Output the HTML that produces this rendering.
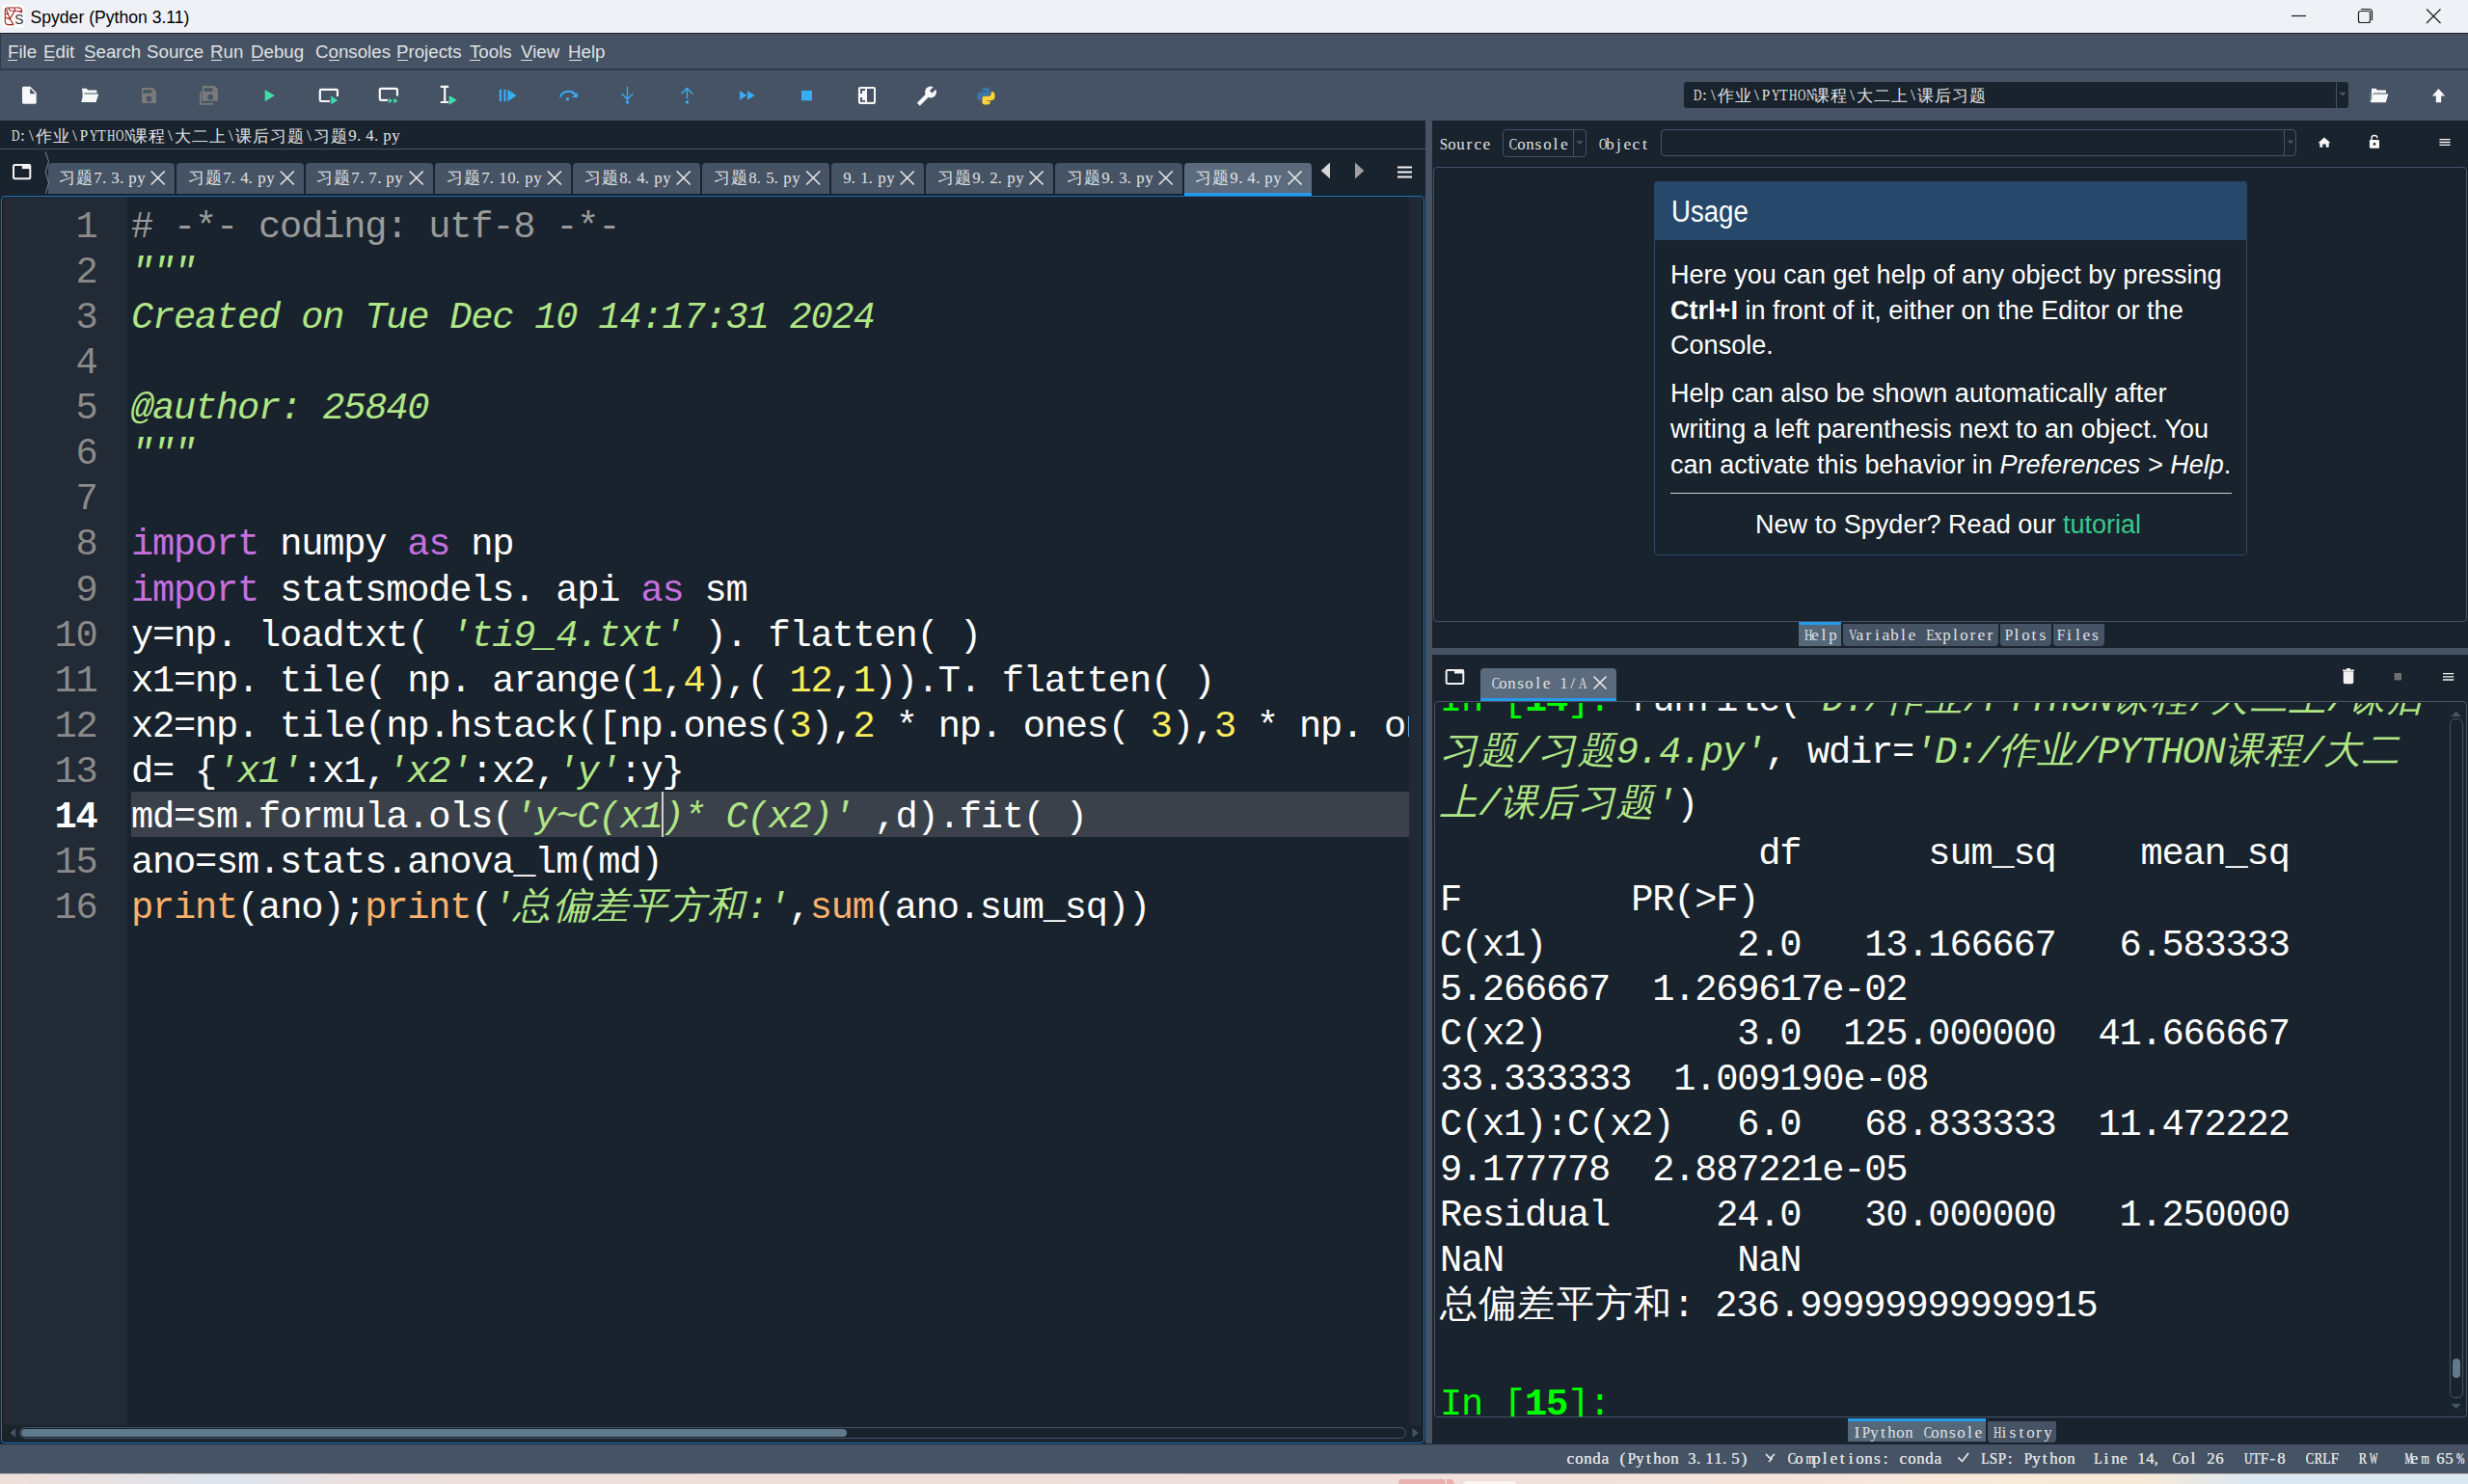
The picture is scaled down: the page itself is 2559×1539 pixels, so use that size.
<!DOCTYPE html>
<html><head><meta charset="utf-8">
<style>
*{margin:0;padding:0;box-sizing:border-box}
html,body{width:2559px;height:1539px;overflow:hidden;background:#19232d;font-family:"Liberation Sans",sans-serif;}
.a{position:absolute}
svg.a{overflow:visible}
</style></head>
<body>
<div class="a" style="left:0px;top:0px;width:2559px;height:34px;background:#eff1f6;"></div>
<svg class="a" style="left:0;top:0" width="40" height="34" viewBox="0 0 40 34">
<rect x="2" y="4.6" width="23.7" height="24.4" rx="4" fill="#fbfbfb"/>
<g fill="none" stroke="#a81c1c" stroke-width="1.1">
<path d="M22.6 13.5 V11 a3 3 0 0 0 -3 -3 H8.3 a3 3 0 0 0 -3 3 V22.6 a3 3 0 0 0 3 3 H14"/>
<path d="M6.5 9.5 L10.3 19.6 L14 25.6 M10.3 19.6 L15.5 11 L22.6 12.5 M6 18.5 L10.3 19.6 M6.2 14 L8.5 15 M9 8.3 L10 11 L22 11.5 M15 8.2 L15.5 11"/>
</g>
<text x="15.2" y="25.4" font-family="Liberation Sans" font-size="13.8" fill="#333">S</text>
</svg>
<div class="a" style="left:31.5px;top:7.60px;font-size:17.6px;line-height:21px;font-family:'Liberation Sans',sans-serif;color:#000;white-space:pre;">Spyder (Python 3.11)</div>
<svg class="a" style="left:0;top:0" width="2559" height="1539" viewBox="0 0 2559 1539"><g stroke="#1a1a1a" stroke-width="1.2" fill="none">
<path d="M2376 16.5 H2391"/>
<rect x="2445.5" y="11.5" width="12" height="12" rx="2"/>
<path d="M2448 9.5 H2456.5 a3 3 0 0 1 3 3 V21"/>
<path d="M2516 9.5 L2530.5 24 M2530.5 9.5 L2516 24"/>
</g></svg>
<div class="a" style="left:0px;top:34px;width:2559px;height:38px;background:#455364;border-top:1px solid #19232d;border-bottom:1px solid #2f3b48;border-left:1px solid #2f3b48"></div>
<div class="a" style="left:7.7px;top:42.25px;font-size:19.2px;line-height:23px;font-family:'Liberation Sans',sans-serif;color:#e0e1e3;white-space:pre;transform:scaleX(0.975);transform-origin:0 0;">File</div>
<div class="a" style="left:45.4px;top:42.25px;font-size:19.2px;line-height:23px;font-family:'Liberation Sans',sans-serif;color:#e0e1e3;white-space:pre;transform:scaleX(0.975);transform-origin:0 0;">Edit</div>
<div class="a" style="left:87px;top:42.25px;font-size:19.2px;line-height:23px;font-family:'Liberation Sans',sans-serif;color:#e0e1e3;white-space:pre;transform:scaleX(0.975);transform-origin:0 0;">Search</div>
<div class="a" style="left:152.3px;top:42.25px;font-size:19.2px;line-height:23px;font-family:'Liberation Sans',sans-serif;color:#e0e1e3;white-space:pre;transform:scaleX(0.975);transform-origin:0 0;">Source</div>
<div class="a" style="left:218.4px;top:42.25px;font-size:19.2px;line-height:23px;font-family:'Liberation Sans',sans-serif;color:#e0e1e3;white-space:pre;transform:scaleX(0.975);transform-origin:0 0;">Run</div>
<div class="a" style="left:260.4px;top:42.25px;font-size:19.2px;line-height:23px;font-family:'Liberation Sans',sans-serif;color:#e0e1e3;white-space:pre;transform:scaleX(0.975);transform-origin:0 0;">Debug</div>
<div class="a" style="left:327px;top:42.25px;font-size:19.2px;line-height:23px;font-family:'Liberation Sans',sans-serif;color:#e0e1e3;white-space:pre;transform:scaleX(0.975);transform-origin:0 0;">Consoles</div>
<div class="a" style="left:411px;top:42.25px;font-size:19.2px;line-height:23px;font-family:'Liberation Sans',sans-serif;color:#e0e1e3;white-space:pre;transform:scaleX(0.975);transform-origin:0 0;">Projects</div>
<div class="a" style="left:487px;top:42.25px;font-size:19.2px;line-height:23px;font-family:'Liberation Sans',sans-serif;color:#e0e1e3;white-space:pre;transform:scaleX(0.975);transform-origin:0 0;">Tools</div>
<div class="a" style="left:539.7px;top:42.25px;font-size:19.2px;line-height:23px;font-family:'Liberation Sans',sans-serif;color:#e0e1e3;white-space:pre;transform:scaleX(0.975);transform-origin:0 0;">View</div>
<div class="a" style="left:589.3px;top:42.25px;font-size:19.2px;line-height:23px;font-family:'Liberation Sans',sans-serif;color:#e0e1e3;white-space:pre;transform:scaleX(0.975);transform-origin:0 0;">Help</div>
<div class="a" style="left:8px;top:62px;width:10px;height:1.3px;background:#e0e1e3;"></div>
<div class="a" style="left:46px;top:62px;width:10px;height:1.3px;background:#e0e1e3;"></div>
<div class="a" style="left:87.5px;top:62px;width:11px;height:1.3px;background:#e0e1e3;"></div>
<div class="a" style="left:191px;top:62px;width:9px;height:1.3px;background:#e0e1e3;"></div>
<div class="a" style="left:218.5px;top:62px;width:11px;height:1.3px;background:#e0e1e3;"></div>
<div class="a" style="left:261px;top:62px;width:13px;height:1.3px;background:#e0e1e3;"></div>
<div class="a" style="left:341px;top:62px;width:11px;height:1.3px;background:#e0e1e3;"></div>
<div class="a" style="left:411.5px;top:62px;width:11px;height:1.3px;background:#e0e1e3;"></div>
<div class="a" style="left:487px;top:62px;width:11px;height:1.3px;background:#e0e1e3;"></div>
<div class="a" style="left:539.5px;top:62px;width:12px;height:1.3px;background:#e0e1e3;"></div>
<div class="a" style="left:589.5px;top:62px;width:13px;height:1.3px;background:#e0e1e3;"></div>
<div class="a" style="left:0px;top:72px;width:2559px;height:53px;background:#455364;border-top:1px solid #2f3b48"></div>
<svg class="a" style="left:0;top:0" width="2559" height="1539" viewBox="0 0 2559 1539">
<path d="M24.5 89.8 H31.3 L37.7 96.3 V106.3 a1.5 1.5 0 0 1 -1.5 1.5 H24.5 a1.5 1.5 0 0 1 -1.5 -1.5 V91.3 a1.5 1.5 0 0 1 1.5 -1.5Z" fill="#f8f8f8"/>
<path d="M31.2 91.5 V97.2 H36.6Z" fill="#455364"/>
<path d="M85 91.8 H89.8 L91.2 93.6 H99.5 a1 1 0 0 1 1 1 V96.5 H87.6 L85.6 104 V97 Z" fill="#f8f8f8"/>
<path d="M84.3 92.5 V105 a1 1 0 0 0 1 1 H99.5 L102.3 97.5 H87 L84.3 105" fill="#f8f8f8"/>
<path d="M148 90.9 H158.5 L162 94.4 V106 a1 1 0 0 1 -1 1 H148 a1 1 0 0 1 -1 -1 V91.9 a1 1 0 0 1 1 -1Z" fill="#7a7a7a"/>
<rect x="148.3" y="93.1" width="9" height="3.6" fill="#455364"/>
<circle cx="154.5" cy="102.5" r="2.9" fill="#455364"/>
<path d="M210.7 89 H222.3 L225.8 92.5 V103.7 a1 1 0 0 1 -1 1 H210.7 a1 1 0 0 1 -1 -1 V90 a1 1 0 0 1 1 -1Z" fill="#7a7a7a"/>
<rect x="211.5" y="91.3" width="9" height="3.6" fill="#455364"/>
<circle cx="218.2" cy="100.7" r="2.9" fill="#455364"/>
<path d="M208 95 V107.8 H221" stroke="#7a7a7a" stroke-width="1.8" fill="none"/>
<path d="M274.7 92.9 L284.9 99.1 L274.7 105.3Z" fill="#40dcaa"/>
<path d="M342 105 H333 a1.2 1.2 0 0 1 -1.2 -1.2 V94 a1.2 1.2 0 0 1 1.2 -1.2 H348.7 a1.2 1.2 0 0 1 1.2 1.2 V100" stroke="#f8f8f8" stroke-width="2.2" fill="none"/>
<path d="M342.8 98.8 L350.7 104 L342.8 109.1Z" fill="#40dcaa" stroke="#455364" stroke-width="0.8"/>
<path d="M402 103.8 H395 a1.2 1.2 0 0 1 -1.2 -1.2 V93.1 a1.2 1.2 0 0 1 1.2 -1.2 H410.7 a1.2 1.2 0 0 1 1.2 1.2 V99.5" stroke="#f8f8f8" stroke-width="2.2" fill="none"/>
<path d="M402.8 101.2 L407.7 104.5 L402.8 107.8Z M408 101.2 L413 104.5 L408 107.8Z" fill="#40dcaa" stroke="#455364" stroke-width="0.6"/>
<path d="M456.7 89.8 H465.2 M456.7 106 H465.2 M461.2 89.8 V106" stroke="#f8f8f8" stroke-width="2.2" fill="none"/>
<path d="M465.7 99 L473.7 103.8 L465.7 108.7Z" fill="#40dcaa"/>
<rect x="517.8" y="92.7" width="2.3" height="12.5" fill="#38acf6"/>
<rect x="522.3" y="92.7" width="2.3" height="12.5" fill="#38acf6"/>
<path d="M526.3 92.7 L535.6 99 L526.3 105.2Z" fill="#38acf6"/>
<path d="M580.9 100.8 C582.5 94.5 592 92.8 596.3 97.8" stroke="#38acf6" stroke-width="2" fill="none"/>
<path d="M599 95.8 L598.6 101.6 L593 100.4Z" fill="#38acf6"/>
<circle cx="588.5" cy="102.7" r="1.8" fill="#38acf6"/>
<path d="M650.5 90 V103 M644.7 97.2 L650.5 103 L656.3 97.2" stroke="#38acf6" stroke-width="1.4" fill="none"/>
<circle cx="650.5" cy="106" r="1.8" fill="#38acf6"/>
<path d="M712.4 91.4 V102.5 M706.5 97.2 L712.4 91.4 L718.2 97.2" stroke="#38acf6" stroke-width="1.4" fill="none"/>
<circle cx="712.4" cy="106" r="1.8" fill="#38acf6"/>
<path d="M767 94 L774.4 98.9 L767 103.8Z M775 94 L782.6 98.9 L775 103.8Z" fill="#38acf6"/>
<rect x="831" y="93.9" width="11" height="10.4" fill="#38acf6"/>
<rect x="889.9" y="89.9" width="18.1" height="18.1" rx="2.2" fill="#f8f8f8"/>
<rect x="899" y="92" width="7" height="13.8" fill="#455364"/>
<path d="M892 92 H897 V94 H894 V97 H892Z M892 101 H894 V103.9 H897 V105.8 H892Z" fill="#455364"/>
<circle cx="965" cy="95.5" r="5.9" fill="#f8f8f8"/>
<path d="M966.48 96.56 L971.93 91.11 L969.39 88.57 L963.94 94.02Z" fill="#455364"/>
<path d="M961.5 99 L952.3 108.2" stroke="#f8f8f8" stroke-width="4.2"/>
<path d="M1022.3 90.7 c-4.6 0 -4.3 2 -4.3 2 v2.1 h4.4 v0.6 h-6.2 c0 0 -2.9 -0.3 -2.9 4.3 c0 4.6 2.5 4.4 2.5 4.4 h1.5 v-2.1 c0 0 -0.1 -2.5 2.5 -2.5 h4.3 c0 0 2.4 0 2.4 -2.3 v-3.9 c0 0 0.4 -2.6 -4.2 -2.6z" fill="#3b77a8"/>
<path d="M1022.6 108.6 c4.6 0 4.3 -2 4.3 -2 v-2.1 h-4.4 v-0.6 h6.2 c0 0 2.9 0.3 2.9 -4.3 c0 -4.6 -2.5 -4.4 -2.5 -4.4 h-1.5 v2.1 c0 0 0.1 2.5 -2.5 2.5 h-4.3 c0 0 -2.4 0 -2.4 2.3 v3.9 c0 0 -0.4 2.6 4.2 2.6z" fill="#ffd43b"/>
<circle cx="1019.6" cy="92.6" r="0.8" fill="#2a5a85"/><circle cx="1025.8" cy="106.4" r="0.8" fill="#b89a20"/>
</svg>
<div class="a" style="left:0px;top:125px;width:1478px;height:29px;background:#19232d;"></div>
<div class="a" style="left:0px;top:154px;width:1478px;height:1px;background:#455364;"></div>
<div class="a" style="left:10px;top:130.19px;font-size:17.5px;line-height:21px;font-family:'Liberation Serif',serif;color:#e0e1e3;white-space:pre;"><span style="display:inline-block;width:9px;text-align:center"><span style="display:inline-block;transform:scaleX(0.665);">D</span></span><span style="display:inline-block;width:9px;text-align:center"><span style="display:inline-block;">:</span></span><span style="display:inline-block;width:9px;text-align:center"><span style="display:inline-block;">\</span></span></div>
<div class="a" style="left:37px;top:131.71px;font-size:17px;line-height:20px;font-family:'Liberation Sans',sans-serif;color:#e0e1e3;white-space:pre;letter-spacing:1.00px;">作业</div>
<div class="a" style="left:73px;top:130.19px;font-size:17.5px;line-height:21px;font-family:'Liberation Serif',serif;color:#e0e1e3;white-space:pre;"><span style="display:inline-block;width:9px;text-align:center"><span style="display:inline-block;">\</span></span><span style="display:inline-block;width:9px;text-align:center"><span style="display:inline-block;transform:scaleX(0.863);">P</span></span><span style="display:inline-block;width:9px;text-align:center"><span style="display:inline-block;transform:scaleX(0.665);">Y</span></span><span style="display:inline-block;width:9px;text-align:center"><span style="display:inline-block;transform:scaleX(0.786);">T</span></span><span style="display:inline-block;width:9px;text-align:center"><span style="display:inline-block;transform:scaleX(0.665);">H</span></span><span style="display:inline-block;width:9px;text-align:center"><span style="display:inline-block;transform:scaleX(0.665);">O</span></span><span style="display:inline-block;width:9px;text-align:center"><span style="display:inline-block;transform:scaleX(0.665);">N</span></span></div>
<div class="a" style="left:136px;top:131.71px;font-size:17px;line-height:20px;font-family:'Liberation Sans',sans-serif;color:#e0e1e3;white-space:pre;letter-spacing:1.00px;">课程</div>
<div class="a" style="left:172px;top:130.19px;font-size:17.5px;line-height:21px;font-family:'Liberation Serif',serif;color:#e0e1e3;white-space:pre;"><span style="display:inline-block;width:9px;text-align:center"><span style="display:inline-block;">\</span></span></div>
<div class="a" style="left:181px;top:131.71px;font-size:17px;line-height:20px;font-family:'Liberation Sans',sans-serif;color:#e0e1e3;white-space:pre;letter-spacing:1.00px;">大二上</div>
<div class="a" style="left:235px;top:130.19px;font-size:17.5px;line-height:21px;font-family:'Liberation Serif',serif;color:#e0e1e3;white-space:pre;"><span style="display:inline-block;width:9px;text-align:center"><span style="display:inline-block;">\</span></span></div>
<div class="a" style="left:244px;top:131.71px;font-size:17px;line-height:20px;font-family:'Liberation Sans',sans-serif;color:#e0e1e3;white-space:pre;letter-spacing:1.00px;">课后习题</div>
<div class="a" style="left:316px;top:130.19px;font-size:17.5px;line-height:21px;font-family:'Liberation Serif',serif;color:#e0e1e3;white-space:pre;"><span style="display:inline-block;width:9px;text-align:center"><span style="display:inline-block;">\</span></span></div>
<div class="a" style="left:325px;top:131.71px;font-size:17px;line-height:20px;font-family:'Liberation Sans',sans-serif;color:#e0e1e3;white-space:pre;letter-spacing:1.00px;">习题</div>
<div class="a" style="left:361px;top:130.19px;font-size:17.5px;line-height:21px;font-family:'Liberation Serif',serif;color:#e0e1e3;white-space:pre;"><span style="display:inline-block;width:9px;text-align:center"><span style="display:inline-block;transform:scaleX(0.960);">9</span></span><span style="display:inline-block;width:9px;text-align:left"><span style="display:inline-block;">.</span></span><span style="display:inline-block;width:9px;text-align:center"><span style="display:inline-block;transform:scaleX(0.960);">4</span></span><span style="display:inline-block;width:9px;text-align:left"><span style="display:inline-block;">.</span></span><span style="display:inline-block;width:9px;text-align:center"><span style="display:inline-block;transform:scaleX(0.960);">p</span></span><span style="display:inline-block;width:9px;text-align:center"><span style="display:inline-block;transform:scaleX(0.960);">y</span></span></div>
<div class="a" style="left:0px;top:155px;width:1478px;height:48px;background:#19232d;"></div>
<div class="a" style="left:49.6px;top:169px;width:131.1px;height:32px;background:#455364;border-radius:4px 4px 0 0"></div>
<div class="a" style="left:61.1px;top:175.11px;font-size:17px;line-height:20px;font-family:'Liberation Sans',sans-serif;color:#e0e1e3;white-space:pre;letter-spacing:1.00px;">习题</div>
<div class="a" style="left:97.1px;top:173.59px;font-size:17.5px;line-height:21px;font-family:'Liberation Serif',serif;color:#e0e1e3;white-space:pre;"><span style="display:inline-block;width:9px;text-align:center"><span style="display:inline-block;transform:scaleX(0.960);">7</span></span><span style="display:inline-block;width:9px;text-align:left"><span style="display:inline-block;">.</span></span><span style="display:inline-block;width:9px;text-align:center"><span style="display:inline-block;transform:scaleX(0.960);">3</span></span><span style="display:inline-block;width:9px;text-align:left"><span style="display:inline-block;">.</span></span><span style="display:inline-block;width:9px;text-align:center"><span style="display:inline-block;transform:scaleX(0.960);">p</span></span><span style="display:inline-block;width:9px;text-align:center"><span style="display:inline-block;transform:scaleX(0.960);">y</span></span></div>
<div class="a" style="left:183px;top:169px;width:131.8px;height:32px;background:#455364;border-radius:4px 4px 0 0"></div>
<div class="a" style="left:194.5px;top:175.11px;font-size:17px;line-height:20px;font-family:'Liberation Sans',sans-serif;color:#e0e1e3;white-space:pre;letter-spacing:1.00px;">习题</div>
<div class="a" style="left:230.5px;top:173.59px;font-size:17.5px;line-height:21px;font-family:'Liberation Serif',serif;color:#e0e1e3;white-space:pre;"><span style="display:inline-block;width:9px;text-align:center"><span style="display:inline-block;transform:scaleX(0.960);">7</span></span><span style="display:inline-block;width:9px;text-align:left"><span style="display:inline-block;">.</span></span><span style="display:inline-block;width:9px;text-align:center"><span style="display:inline-block;transform:scaleX(0.960);">4</span></span><span style="display:inline-block;width:9px;text-align:left"><span style="display:inline-block;">.</span></span><span style="display:inline-block;width:9px;text-align:center"><span style="display:inline-block;transform:scaleX(0.960);">p</span></span><span style="display:inline-block;width:9px;text-align:center"><span style="display:inline-block;transform:scaleX(0.960);">y</span></span></div>
<div class="a" style="left:316.8px;top:169px;width:131.89999999999998px;height:32px;background:#455364;border-radius:4px 4px 0 0"></div>
<div class="a" style="left:328.3px;top:175.11px;font-size:17px;line-height:20px;font-family:'Liberation Sans',sans-serif;color:#e0e1e3;white-space:pre;letter-spacing:1.00px;">习题</div>
<div class="a" style="left:364.3px;top:173.59px;font-size:17.5px;line-height:21px;font-family:'Liberation Serif',serif;color:#e0e1e3;white-space:pre;"><span style="display:inline-block;width:9px;text-align:center"><span style="display:inline-block;transform:scaleX(0.960);">7</span></span><span style="display:inline-block;width:9px;text-align:left"><span style="display:inline-block;">.</span></span><span style="display:inline-block;width:9px;text-align:center"><span style="display:inline-block;transform:scaleX(0.960);">7</span></span><span style="display:inline-block;width:9px;text-align:left"><span style="display:inline-block;">.</span></span><span style="display:inline-block;width:9px;text-align:center"><span style="display:inline-block;transform:scaleX(0.960);">p</span></span><span style="display:inline-block;width:9px;text-align:center"><span style="display:inline-block;transform:scaleX(0.960);">y</span></span></div>
<div class="a" style="left:451px;top:169px;width:140.89999999999998px;height:32px;background:#455364;border-radius:4px 4px 0 0"></div>
<div class="a" style="left:462.5px;top:175.11px;font-size:17px;line-height:20px;font-family:'Liberation Sans',sans-serif;color:#e0e1e3;white-space:pre;letter-spacing:1.00px;">习题</div>
<div class="a" style="left:498.5px;top:173.59px;font-size:17.5px;line-height:21px;font-family:'Liberation Serif',serif;color:#e0e1e3;white-space:pre;"><span style="display:inline-block;width:9px;text-align:center"><span style="display:inline-block;transform:scaleX(0.960);">7</span></span><span style="display:inline-block;width:9px;text-align:left"><span style="display:inline-block;">.</span></span><span style="display:inline-block;width:9px;text-align:center"><span style="display:inline-block;transform:scaleX(0.960);">1</span></span><span style="display:inline-block;width:9px;text-align:center"><span style="display:inline-block;transform:scaleX(0.960);">0</span></span><span style="display:inline-block;width:9px;text-align:left"><span style="display:inline-block;">.</span></span><span style="display:inline-block;width:9px;text-align:center"><span style="display:inline-block;transform:scaleX(0.960);">p</span></span><span style="display:inline-block;width:9px;text-align:center"><span style="display:inline-block;transform:scaleX(0.960);">y</span></span></div>
<div class="a" style="left:594px;top:169px;width:131.70000000000005px;height:32px;background:#455364;border-radius:4px 4px 0 0"></div>
<div class="a" style="left:605.5px;top:175.11px;font-size:17px;line-height:20px;font-family:'Liberation Sans',sans-serif;color:#e0e1e3;white-space:pre;letter-spacing:1.00px;">习题</div>
<div class="a" style="left:641.5px;top:173.59px;font-size:17.5px;line-height:21px;font-family:'Liberation Serif',serif;color:#e0e1e3;white-space:pre;"><span style="display:inline-block;width:9px;text-align:center"><span style="display:inline-block;transform:scaleX(0.960);">8</span></span><span style="display:inline-block;width:9px;text-align:left"><span style="display:inline-block;">.</span></span><span style="display:inline-block;width:9px;text-align:center"><span style="display:inline-block;transform:scaleX(0.960);">4</span></span><span style="display:inline-block;width:9px;text-align:left"><span style="display:inline-block;">.</span></span><span style="display:inline-block;width:9px;text-align:center"><span style="display:inline-block;transform:scaleX(0.960);">p</span></span><span style="display:inline-block;width:9px;text-align:center"><span style="display:inline-block;transform:scaleX(0.960);">y</span></span></div>
<div class="a" style="left:728px;top:169px;width:132.20000000000005px;height:32px;background:#455364;border-radius:4px 4px 0 0"></div>
<div class="a" style="left:739.5px;top:175.11px;font-size:17px;line-height:20px;font-family:'Liberation Sans',sans-serif;color:#e0e1e3;white-space:pre;letter-spacing:1.00px;">习题</div>
<div class="a" style="left:775.5px;top:173.59px;font-size:17.5px;line-height:21px;font-family:'Liberation Serif',serif;color:#e0e1e3;white-space:pre;"><span style="display:inline-block;width:9px;text-align:center"><span style="display:inline-block;transform:scaleX(0.960);">8</span></span><span style="display:inline-block;width:9px;text-align:left"><span style="display:inline-block;">.</span></span><span style="display:inline-block;width:9px;text-align:center"><span style="display:inline-block;transform:scaleX(0.960);">5</span></span><span style="display:inline-block;width:9px;text-align:left"><span style="display:inline-block;">.</span></span><span style="display:inline-block;width:9px;text-align:center"><span style="display:inline-block;transform:scaleX(0.960);">p</span></span><span style="display:inline-block;width:9px;text-align:center"><span style="display:inline-block;transform:scaleX(0.960);">y</span></span></div>
<div class="a" style="left:861.9px;top:169px;width:95.80000000000007px;height:32px;background:#455364;border-radius:4px 4px 0 0"></div>
<div class="a" style="left:873.4px;top:173.59px;font-size:17.5px;line-height:21px;font-family:'Liberation Serif',serif;color:#e0e1e3;white-space:pre;"><span style="display:inline-block;width:9px;text-align:center"><span style="display:inline-block;transform:scaleX(0.960);">9</span></span><span style="display:inline-block;width:9px;text-align:left"><span style="display:inline-block;">.</span></span><span style="display:inline-block;width:9px;text-align:center"><span style="display:inline-block;transform:scaleX(0.960);">1</span></span><span style="display:inline-block;width:9px;text-align:left"><span style="display:inline-block;">.</span></span><span style="display:inline-block;width:9px;text-align:center"><span style="display:inline-block;transform:scaleX(0.960);">p</span></span><span style="display:inline-block;width:9px;text-align:center"><span style="display:inline-block;transform:scaleX(0.960);">y</span></span></div>
<div class="a" style="left:960px;top:169px;width:131.5999999999999px;height:32px;background:#455364;border-radius:4px 4px 0 0"></div>
<div class="a" style="left:971.5px;top:175.11px;font-size:17px;line-height:20px;font-family:'Liberation Sans',sans-serif;color:#e0e1e3;white-space:pre;letter-spacing:1.00px;">习题</div>
<div class="a" style="left:1007.5px;top:173.59px;font-size:17.5px;line-height:21px;font-family:'Liberation Serif',serif;color:#e0e1e3;white-space:pre;"><span style="display:inline-block;width:9px;text-align:center"><span style="display:inline-block;transform:scaleX(0.960);">9</span></span><span style="display:inline-block;width:9px;text-align:left"><span style="display:inline-block;">.</span></span><span style="display:inline-block;width:9px;text-align:center"><span style="display:inline-block;transform:scaleX(0.960);">2</span></span><span style="display:inline-block;width:9px;text-align:left"><span style="display:inline-block;">.</span></span><span style="display:inline-block;width:9px;text-align:center"><span style="display:inline-block;transform:scaleX(0.960);">p</span></span><span style="display:inline-block;width:9px;text-align:center"><span style="display:inline-block;transform:scaleX(0.960);">y</span></span></div>
<div class="a" style="left:1094px;top:169px;width:131.70000000000005px;height:32px;background:#455364;border-radius:4px 4px 0 0"></div>
<div class="a" style="left:1105.5px;top:175.11px;font-size:17px;line-height:20px;font-family:'Liberation Sans',sans-serif;color:#e0e1e3;white-space:pre;letter-spacing:1.00px;">习题</div>
<div class="a" style="left:1141.5px;top:173.59px;font-size:17.5px;line-height:21px;font-family:'Liberation Serif',serif;color:#e0e1e3;white-space:pre;"><span style="display:inline-block;width:9px;text-align:center"><span style="display:inline-block;transform:scaleX(0.960);">9</span></span><span style="display:inline-block;width:9px;text-align:left"><span style="display:inline-block;">.</span></span><span style="display:inline-block;width:9px;text-align:center"><span style="display:inline-block;transform:scaleX(0.960);">3</span></span><span style="display:inline-block;width:9px;text-align:left"><span style="display:inline-block;">.</span></span><span style="display:inline-block;width:9px;text-align:center"><span style="display:inline-block;transform:scaleX(0.960);">p</span></span><span style="display:inline-block;width:9px;text-align:center"><span style="display:inline-block;transform:scaleX(0.960);">y</span></span></div>
<div class="a" style="left:1227.8px;top:169px;width:131.79999999999995px;height:32px;background:#5b6b7d;border-radius:4px 4px 0 0"></div>
<div class="a" style="left:1227.8px;top:200px;width:131.79999999999995px;height:3px;background:#259ae9;"></div>
<div class="a" style="left:1239.3px;top:175.11px;font-size:17px;line-height:20px;font-family:'Liberation Sans',sans-serif;color:#e0e1e3;white-space:pre;letter-spacing:1.00px;">习题</div>
<div class="a" style="left:1275.3px;top:173.59px;font-size:17.5px;line-height:21px;font-family:'Liberation Serif',serif;color:#e0e1e3;white-space:pre;"><span style="display:inline-block;width:9px;text-align:center"><span style="display:inline-block;transform:scaleX(0.960);">9</span></span><span style="display:inline-block;width:9px;text-align:left"><span style="display:inline-block;">.</span></span><span style="display:inline-block;width:9px;text-align:center"><span style="display:inline-block;transform:scaleX(0.960);">4</span></span><span style="display:inline-block;width:9px;text-align:left"><span style="display:inline-block;">.</span></span><span style="display:inline-block;width:9px;text-align:center"><span style="display:inline-block;transform:scaleX(0.960);">p</span></span><span style="display:inline-block;width:9px;text-align:center"><span style="display:inline-block;transform:scaleX(0.960);">y</span></span></div>
<svg class="a" style="left:0;top:0" width="2559" height="1539" viewBox="0 0 2559 1539"><path d="M156.7 177.5 L170.7 191.5 M170.7 177.5 L156.7 191.5" stroke="#e6e6e6" stroke-width="1.7"/><path d="M290.8 177.5 L304.8 191.5 M304.8 177.5 L290.8 191.5" stroke="#e6e6e6" stroke-width="1.7"/><path d="M424.7 177.5 L438.7 191.5 M438.7 177.5 L424.7 191.5" stroke="#e6e6e6" stroke-width="1.7"/><path d="M567.9 177.5 L581.9 191.5 M581.9 177.5 L567.9 191.5" stroke="#e6e6e6" stroke-width="1.7"/><path d="M701.7 177.5 L715.7 191.5 M715.7 177.5 L701.7 191.5" stroke="#e6e6e6" stroke-width="1.7"/><path d="M836.2 177.5 L850.2 191.5 M850.2 177.5 L836.2 191.5" stroke="#e6e6e6" stroke-width="1.7"/><path d="M933.7 177.5 L947.7 191.5 M947.7 177.5 L933.7 191.5" stroke="#e6e6e6" stroke-width="1.7"/><path d="M1067.6 177.5 L1081.6 191.5 M1081.6 177.5 L1067.6 191.5" stroke="#e6e6e6" stroke-width="1.7"/><path d="M1201.7 177.5 L1215.7 191.5 M1215.7 177.5 L1201.7 191.5" stroke="#e6e6e6" stroke-width="1.7"/><path d="M1335.6 177.5 L1349.6 191.5 M1349.6 177.5 L1335.6 191.5" stroke="#e6e6e6" stroke-width="1.7"/>
<path d="M47 157.5 L50.5 167.5 L47.3 178 L50.5 189.8 L47.3 200.5" stroke="#8a8f96" stroke-width="0.9" fill="none" stroke-linejoin="round"/>
<rect x="14" y="171" width="17.3" height="14.3" rx="1.5" stroke="#f5f5f5" stroke-width="2" fill="none"/>
<rect x="22.8" y="170.5" width="9" height="4.6" fill="#f5f5f5"/>
<path d="M1379 168.6 V185.2 L1369.7 176.9Z" fill="#d8d8d8"/>
<path d="M1405 168.6 V185.6 L1414.3 177.1Z" fill="#a0a0a0"/>
<path d="M1449 173.5 H1464 M1449 178.5 H1464 M1449 183.5 H1464" stroke="#f5f5f5" stroke-width="1.9"/>
</svg>
<div class="a" style="left:1px;top:203px;width:1476px;height:1294px;background:#19232d;border:1px solid #1a72bb;border-radius:4px"></div>
<div class="a" style="left:4px;top:204px;width:128px;height:1274px;background:#222a35;"></div>
<div class="a" style="left:1461px;top:204px;width:13px;height:1274px;background:#212934;"></div>
<div class="a" style="left:20px;top:1480px;width:1438px;height:12px;background:transparent;border:1px solid #455364;border-radius:6px"></div>
<div class="a" style="left:21.8px;top:1481.8px;width:856px;height:8.2px;background:#60798b;border-radius:4px"></div>
<svg class="a" style="left:0;top:0" width="2559" height="1539" viewBox="0 0 2559 1539"><path d="M16.2 1481 V1491 L10.5 1486Z" fill="#455364"/>
<path d="M1464.5 1481 V1491 L1470.7 1486Z" fill="#455364"/></svg>
<div class="a" style="left:136px;top:821px;width:1325px;height:47px;background:#3a414a;"></div>
<div class="a" style="left:78.5px;top:213.20px;font-size:38.7px;line-height:46px;font-family:'Liberation Mono',monospace;color:#8a8a8a;white-space:pre;letter-spacing:-1.2px;">1</div>
<div class="a" style="left:78.5px;top:260.24px;font-size:38.7px;line-height:46px;font-family:'Liberation Mono',monospace;color:#8a8a8a;white-space:pre;letter-spacing:-1.2px;">2</div>
<div class="a" style="left:78.5px;top:307.28px;font-size:38.7px;line-height:46px;font-family:'Liberation Mono',monospace;color:#8a8a8a;white-space:pre;letter-spacing:-1.2px;">3</div>
<div class="a" style="left:78.5px;top:354.32px;font-size:38.7px;line-height:46px;font-family:'Liberation Mono',monospace;color:#8a8a8a;white-space:pre;letter-spacing:-1.2px;">4</div>
<div class="a" style="left:78.5px;top:401.36px;font-size:38.7px;line-height:46px;font-family:'Liberation Mono',monospace;color:#8a8a8a;white-space:pre;letter-spacing:-1.2px;">5</div>
<div class="a" style="left:78.5px;top:448.40px;font-size:38.7px;line-height:46px;font-family:'Liberation Mono',monospace;color:#8a8a8a;white-space:pre;letter-spacing:-1.2px;">6</div>
<div class="a" style="left:78.5px;top:495.44px;font-size:38.7px;line-height:46px;font-family:'Liberation Mono',monospace;color:#8a8a8a;white-space:pre;letter-spacing:-1.2px;">7</div>
<div class="a" style="left:78.5px;top:542.48px;font-size:38.7px;line-height:46px;font-family:'Liberation Mono',monospace;color:#8a8a8a;white-space:pre;letter-spacing:-1.2px;">8</div>
<div class="a" style="left:78.5px;top:589.52px;font-size:38.7px;line-height:46px;font-family:'Liberation Mono',monospace;color:#8a8a8a;white-space:pre;letter-spacing:-1.2px;">9</div>
<div class="a" style="left:56.5px;top:636.56px;font-size:38.7px;line-height:46px;font-family:'Liberation Mono',monospace;color:#8a8a8a;white-space:pre;letter-spacing:-1.2px;">10</div>
<div class="a" style="left:56.5px;top:683.60px;font-size:38.7px;line-height:46px;font-family:'Liberation Mono',monospace;color:#8a8a8a;white-space:pre;letter-spacing:-1.2px;">11</div>
<div class="a" style="left:56.5px;top:730.64px;font-size:38.7px;line-height:46px;font-family:'Liberation Mono',monospace;color:#8a8a8a;white-space:pre;letter-spacing:-1.2px;">12</div>
<div class="a" style="left:56.5px;top:777.68px;font-size:38.7px;line-height:46px;font-family:'Liberation Mono',monospace;color:#8a8a8a;white-space:pre;letter-spacing:-1.2px;">13</div>
<div class="a" style="left:56.5px;top:824.72px;font-size:38.7px;line-height:46px;font-family:'Liberation Mono',monospace;color:#ffffff;white-space:pre;letter-spacing:-1.2px;font-weight:bold;">14</div>
<div class="a" style="left:56.5px;top:871.76px;font-size:38.7px;line-height:46px;font-family:'Liberation Mono',monospace;color:#8a8a8a;white-space:pre;letter-spacing:-1.2px;">15</div>
<div class="a" style="left:56.5px;top:918.80px;font-size:38.7px;line-height:46px;font-family:'Liberation Mono',monospace;color:#8a8a8a;white-space:pre;letter-spacing:-1.2px;">16</div>
<div class="a" style="left:136px;top:204px;width:1325px;height:1274px;overflow:hidden">
<div class="a" style="left:0px;top:9.20px;font-size:38.7px;line-height:46px;font-family:'Liberation Mono',monospace;color:#ffffff;white-space:pre;letter-spacing:-1.2px;"><span style="color:#9a9a9a;"># -*- coding: utf-8 -*-</span></div>
<div class="a" style="left:0px;top:56.24px;font-size:38.7px;line-height:46px;font-family:'Liberation Mono',monospace;color:#ffffff;white-space:pre;letter-spacing:-1.2px;"><span style="color:#b0e686;font-style:italic;">&quot;&quot;&quot;</span></div>
<div class="a" style="left:0px;top:103.28px;font-size:38.7px;line-height:46px;font-family:'Liberation Mono',monospace;color:#ffffff;white-space:pre;letter-spacing:-1.2px;"><span style="color:#b0e686;font-style:italic;">Created on Tue Dec 10 14:17:31 2024</span></div>
<div class="a" style="left:0px;top:197.36px;font-size:38.7px;line-height:46px;font-family:'Liberation Mono',monospace;color:#ffffff;white-space:pre;letter-spacing:-1.2px;"><span style="color:#b0e686;font-style:italic;">@author: 25840</span></div>
<div class="a" style="left:0px;top:244.40px;font-size:38.7px;line-height:46px;font-family:'Liberation Mono',monospace;color:#ffffff;white-space:pre;letter-spacing:-1.2px;"><span style="color:#b0e686;font-style:italic;">&quot;&quot;&quot;</span></div>
<div class="a" style="left:0px;top:338.48px;font-size:38.7px;line-height:46px;font-family:'Liberation Mono',monospace;color:#ffffff;white-space:pre;letter-spacing:-1.2px;"><span style="color:#c670e0;">import</span><span style="color:#ffffff;"> numpy </span><span style="color:#c670e0;">as</span><span style="color:#ffffff;"> np</span></div>
<div class="a" style="left:0px;top:385.52px;font-size:38.7px;line-height:46px;font-family:'Liberation Mono',monospace;color:#ffffff;white-space:pre;letter-spacing:-1.2px;"><span style="color:#c670e0;">import</span><span style="color:#ffffff;"> statsmodels. api </span><span style="color:#c670e0;">as</span><span style="color:#ffffff;"> sm</span></div>
<div class="a" style="left:0px;top:432.56px;font-size:38.7px;line-height:46px;font-family:'Liberation Mono',monospace;color:#ffffff;white-space:pre;letter-spacing:-1.2px;"><span style="color:#ffffff;">y=np. loadtxt( </span><span style="color:#b0e686;font-style:italic;">&#x27;ti9_4.txt&#x27;</span><span style="color:#ffffff;"> ). flatten( )</span></div>
<div class="a" style="left:0px;top:479.60px;font-size:38.7px;line-height:46px;font-family:'Liberation Mono',monospace;color:#ffffff;white-space:pre;letter-spacing:-1.2px;"><span style="color:#ffffff;">x1=np. tile( np. arange(</span><span style="color:#faed5c;">1</span><span style="color:#ffffff;">,</span><span style="color:#faed5c;">4</span><span style="color:#ffffff;">),( </span><span style="color:#faed5c;">12</span><span style="color:#ffffff;">,</span><span style="color:#faed5c;">1</span><span style="color:#ffffff;">)).T. flatten( )</span></div>
<div class="a" style="left:0px;top:526.64px;font-size:38.7px;line-height:46px;font-family:'Liberation Mono',monospace;color:#ffffff;white-space:pre;letter-spacing:-1.2px;"><span style="color:#ffffff;">x2=np. tile(np.hstack([np.ones(</span><span style="color:#faed5c;">3</span><span style="color:#ffffff;">),</span><span style="color:#faed5c;">2</span><span style="color:#ffffff;"> * np. ones( </span><span style="color:#faed5c;">3</span><span style="color:#ffffff;">),</span><span style="color:#faed5c;">3</span><span style="color:#ffffff;"> * np. ones( 3)]),4)</span></div>
<div class="a" style="left:0px;top:573.68px;font-size:38.7px;line-height:46px;font-family:'Liberation Mono',monospace;color:#ffffff;white-space:pre;letter-spacing:-1.2px;"><span style="color:#ffffff;">d= {</span><span style="color:#b0e686;font-style:italic;">&#x27;x1&#x27;</span><span style="color:#ffffff;">:x1,</span><span style="color:#b0e686;font-style:italic;">&#x27;x2&#x27;</span><span style="color:#ffffff;">:x2,</span><span style="color:#b0e686;font-style:italic;">&#x27;y&#x27;</span><span style="color:#ffffff;">:y}</span></div>
<div class="a" style="left:0px;top:620.72px;font-size:38.7px;line-height:46px;font-family:'Liberation Mono',monospace;color:#ffffff;white-space:pre;letter-spacing:-1.2px;"><span style="color:#ffffff;">md=sm.formula.ols(</span><span style="color:#b0e686;font-style:italic;">&#x27;y~C(x1)* C(x2)&#x27;</span><span style="color:#ffffff;"> ,d).fit( )</span></div>
<div class="a" style="left:0px;top:667.76px;font-size:38.7px;line-height:46px;font-family:'Liberation Mono',monospace;color:#ffffff;white-space:pre;letter-spacing:-1.2px;"><span style="color:#ffffff;">ano=sm.stats.anova_lm(md)</span></div>
<div class="a" style="left:0px;top:714.80px;font-size:38.7px;line-height:46px;font-family:'Liberation Mono',monospace;color:#ffffff;white-space:pre;letter-spacing:-1.2px;"><span style="color:#fab16c;">print</span><span style="color:#ffffff;">(ano);</span><span style="color:#fab16c;">print</span><span style="color:#ffffff;">(</span><span style="color:#b0e686;font-style:italic;">&#x27;</span><span style="color:#b0e686;font-style:italic;letter-spacing:1.2px">总偏差平方和</span><span style="color:#b0e686;font-style:italic;">:&#x27;</span><span style="color:#ffffff;">,</span><span style="color:#fab16c;">sum</span><span style="color:#ffffff;">(ano.sum_sq))</span></div>
</div>
<div class="a" style="left:686px;top:821px;width:2px;height:47px;background:#d9cfc4;"></div>
<div class="a" style="left:1746px;top:85px;width:689px;height:26.7px;background:#19232d;border-radius:3px"></div>
<div class="a" style="left:2422px;top:85px;width:1.2px;height:26.7px;background:#455364;"></div>
<div class="a" style="left:1754px;top:88.39px;font-size:17.5px;line-height:21px;font-family:'Liberation Serif',serif;color:#e0e1e3;white-space:pre;"><span style="display:inline-block;width:9px;text-align:center"><span style="display:inline-block;transform:scaleX(0.665);">D</span></span><span style="display:inline-block;width:9px;text-align:center"><span style="display:inline-block;">:</span></span><span style="display:inline-block;width:9px;text-align:center"><span style="display:inline-block;">\</span></span></div>
<div class="a" style="left:1781px;top:89.91px;font-size:17px;line-height:20px;font-family:'Liberation Sans',sans-serif;color:#e0e1e3;white-space:pre;letter-spacing:1.00px;">作业</div>
<div class="a" style="left:1817px;top:88.39px;font-size:17.5px;line-height:21px;font-family:'Liberation Serif',serif;color:#e0e1e3;white-space:pre;"><span style="display:inline-block;width:9px;text-align:center"><span style="display:inline-block;">\</span></span><span style="display:inline-block;width:9px;text-align:center"><span style="display:inline-block;transform:scaleX(0.863);">P</span></span><span style="display:inline-block;width:9px;text-align:center"><span style="display:inline-block;transform:scaleX(0.665);">Y</span></span><span style="display:inline-block;width:9px;text-align:center"><span style="display:inline-block;transform:scaleX(0.786);">T</span></span><span style="display:inline-block;width:9px;text-align:center"><span style="display:inline-block;transform:scaleX(0.665);">H</span></span><span style="display:inline-block;width:9px;text-align:center"><span style="display:inline-block;transform:scaleX(0.665);">O</span></span><span style="display:inline-block;width:9px;text-align:center"><span style="display:inline-block;transform:scaleX(0.665);">N</span></span></div>
<div class="a" style="left:1880px;top:89.91px;font-size:17px;line-height:20px;font-family:'Liberation Sans',sans-serif;color:#e0e1e3;white-space:pre;letter-spacing:1.00px;">课程</div>
<div class="a" style="left:1916px;top:88.39px;font-size:17.5px;line-height:21px;font-family:'Liberation Serif',serif;color:#e0e1e3;white-space:pre;"><span style="display:inline-block;width:9px;text-align:center"><span style="display:inline-block;">\</span></span></div>
<div class="a" style="left:1925px;top:89.91px;font-size:17px;line-height:20px;font-family:'Liberation Sans',sans-serif;color:#e0e1e3;white-space:pre;letter-spacing:1.00px;">大二上</div>
<div class="a" style="left:1979px;top:88.39px;font-size:17.5px;line-height:21px;font-family:'Liberation Serif',serif;color:#e0e1e3;white-space:pre;"><span style="display:inline-block;width:9px;text-align:center"><span style="display:inline-block;">\</span></span></div>
<div class="a" style="left:1988px;top:89.91px;font-size:17px;line-height:20px;font-family:'Liberation Sans',sans-serif;color:#e0e1e3;white-space:pre;letter-spacing:1.00px;">课后习题</div>
<svg class="a" style="left:0;top:0" width="2559" height="1539" viewBox="0 0 2559 1539"><path d="M2425.3 95.8 H2432.6 L2429 99.8Z" fill="#455364"/>
<path d="M2459 91.8 H2463.5 L2465 93.6 H2473 a1 1 0 0 1 1 1 V96.5 H2461 L2459 104 V93 Z" fill="#f8f8f8"/>
<path d="M2457.8 92.5 V105.3 a1 1 0 0 0 1 1 H2473.8 L2476.4 97.5 H2460.8 L2458.3 105" fill="#f8f8f8"/>
<path d="M2528.5 92.1 L2535.2 99.4 H2531.2 V106.3 H2525.8 V99.4 H2521.8Z" fill="#f8f8f8"/>
</svg>
<div class="a" style="left:1478px;top:125px;width:7px;height:1372px;background:#455364;"></div>
<div class="a" style="left:1485px;top:125px;width:1074px;height:547px;background:#19232d;"></div>
<div class="a" style="left:1492px;top:138.59px;font-size:17.5px;line-height:21px;font-family:'Liberation Serif',serif;color:#e0e1e3;white-space:pre;"><span style="display:inline-block;width:9px;text-align:center"><span style="display:inline-block;transform:scaleX(0.863);">S</span></span><span style="display:inline-block;width:9px;text-align:center"><span style="display:inline-block;transform:scaleX(0.960);">o</span></span><span style="display:inline-block;width:9px;text-align:center"><span style="display:inline-block;transform:scaleX(0.960);">u</span></span><span style="display:inline-block;width:9px;text-align:center"><span style="display:inline-block;">r</span></span><span style="display:inline-block;width:9px;text-align:center"><span style="display:inline-block;">c</span></span><span style="display:inline-block;width:9px;text-align:center"><span style="display:inline-block;">e</span></span></div>
<div class="a" style="left:1558px;top:134.3px;width:86.7px;height:28.4px;background:transparent;border:1px solid #455364;border-radius:4px"></div>
<div class="a" style="left:1631px;top:134.3px;width:1px;height:28.4px;background:#455364;"></div>
<div class="a" style="left:1563.4px;top:138.59px;font-size:17.5px;line-height:21px;font-family:'Liberation Serif',serif;color:#e0e1e3;white-space:pre;"><span style="display:inline-block;width:9px;text-align:center"><span style="display:inline-block;transform:scaleX(0.720);">C</span></span><span style="display:inline-block;width:9px;text-align:center"><span style="display:inline-block;transform:scaleX(0.960);">o</span></span><span style="display:inline-block;width:9px;text-align:center"><span style="display:inline-block;transform:scaleX(0.960);">n</span></span><span style="display:inline-block;width:9px;text-align:center"><span style="display:inline-block;">s</span></span><span style="display:inline-block;width:9px;text-align:center"><span style="display:inline-block;transform:scaleX(0.960);">o</span></span><span style="display:inline-block;width:9px;text-align:center"><span style="display:inline-block;">l</span></span><span style="display:inline-block;width:9px;text-align:center"><span style="display:inline-block;">e</span></span></div>
<div class="a" style="left:1656px;top:138.59px;font-size:17.5px;line-height:21px;font-family:'Liberation Serif',serif;color:#e0e1e3;white-space:pre;"><span style="display:inline-block;width:9px;text-align:center"><span style="display:inline-block;transform:scaleX(0.665);">O</span></span><span style="display:inline-block;width:9px;text-align:center"><span style="display:inline-block;transform:scaleX(0.960);">b</span></span><span style="display:inline-block;width:9px;text-align:center"><span style="display:inline-block;">j</span></span><span style="display:inline-block;width:9px;text-align:center"><span style="display:inline-block;">e</span></span><span style="display:inline-block;width:9px;text-align:center"><span style="display:inline-block;">c</span></span><span style="display:inline-block;width:9px;text-align:center"><span style="display:inline-block;">t</span></span></div>
<div class="a" style="left:1721.7px;top:134.3px;width:659.8px;height:27.4px;background:transparent;border:1px solid #455364;border-radius:4px"></div>
<div class="a" style="left:2368px;top:134.3px;width:1px;height:27.4px;background:#455364;"></div>
<svg class="a" style="left:0;top:0" width="2559" height="1539" viewBox="0 0 2559 1539"><path d="M1634.3 146 H1641.7 L1638 150Z" fill="#455364"/>
<path d="M2371.3 145.5 H2378.7 L2375 149.5Z" fill="#455364"/>
<path d="M2410 142.5 L2416.5 148.2 H2414.7 V152.7 H2411.7 V149.5 H2408.3 V152.7 H2405.3 V148.2 H2403.5Z" fill="#f8f8f8"/>
<rect x="2456.9" y="145" width="10.1" height="8.8" rx="1.2" fill="#f8f8f8"/>
<circle cx="2462" cy="149.4" r="1.3" fill="#19232d"/>
<path d="M2459 145.5 V143.8 a3 3 0 0 1 6 -0.5" stroke="#f8f8f8" stroke-width="1.4" fill="none"/>
<path d="M2529.4 144.6 H2540.6 M2529.4 147.5 H2540.6 M2529.4 150.4 H2540.6" stroke="#f8f8f8" stroke-width="1.3"/>
</svg>
<div class="a" style="left:1486px;top:172.5px;width:1072px;height:472px;background:transparent;border:1px solid #455364;border-radius:4px"></div>
<div class="a" style="left:1715px;top:188px;width:615px;height:388px;background:#19232d;border:1px solid #26486b;border-radius:4px"></div>
<div class="a" style="left:1715px;top:188px;width:615px;height:61px;background:#26486b;border-radius:4px 4px 0 0"></div>
<div class="a" style="left:1733px;top:200.66px;font-size:31px;line-height:37px;font-family:'Liberation Sans',sans-serif;color:#ffffff;white-space:pre;transform:scaleX(0.89);transform-origin:0 0;">Usage</div>
<div class="a" style="left:1732.3px;top:267.23px;font-size:28.2px;line-height:34px;font-family:'Liberation Sans',sans-serif;color:#ffffff;white-space:pre;transform:scaleX(0.96);transform-origin:0 0;">Here you can get help of any object by pressing</div>
<div class="a" style="left:1732.3px;top:303.93px;font-size:28.2px;line-height:34px;font-family:'Liberation Sans',sans-serif;color:#ffffff;white-space:pre;transform:scaleX(0.96);transform-origin:0 0;"><b>Ctrl+I</b> in front of it, either on the Editor or the</div>
<div class="a" style="left:1732.3px;top:340.33px;font-size:28.2px;line-height:34px;font-family:'Liberation Sans',sans-serif;color:#ffffff;white-space:pre;transform:scaleX(0.96);transform-origin:0 0;">Console.</div>
<div class="a" style="left:1732.3px;top:389.73px;font-size:28.2px;line-height:34px;font-family:'Liberation Sans',sans-serif;color:#ffffff;white-space:pre;transform:scaleX(0.96);transform-origin:0 0;">Help can also be shown automatically after</div>
<div class="a" style="left:1732.3px;top:426.53px;font-size:28.2px;line-height:34px;font-family:'Liberation Sans',sans-serif;color:#ffffff;white-space:pre;transform:scaleX(0.96);transform-origin:0 0;">writing a left parenthesis next to an object. You</div>
<div class="a" style="left:1732.3px;top:463.83px;font-size:28.2px;line-height:34px;font-family:'Liberation Sans',sans-serif;color:#ffffff;white-space:pre;transform:scaleX(0.96);transform-origin:0 0;">can activate this behavior in <i>Preferences &gt; Help</i>.</div>
<div class="a" style="left:1732px;top:510.5px;width:582px;height:1.3px;background:#d0d0d0;"></div>
<div class="a" style="left:1820px;top:525.93px;font-size:28.2px;line-height:34px;font-family:'Liberation Sans',sans-serif;color:#ffffff;white-space:pre;transform:scaleX(0.96);transform-origin:0 0;">New to Spyder? Read our <span style="color:#36c98e">tutorial</span></div>
<div class="a" style="left:1486px;top:645px;width:1070px;height:27px;background:#19232d;"></div>
<div class="a" style="left:1864.9px;top:645px;width:44px;height:24.7px;background:#54687a;"></div>
<div class="a" style="left:1864.9px;top:645px;width:44px;height:3px;background:#259ae9;"></div>
<div class="a" style="left:1911px;top:647px;width:161.0px;height:22.7px;background:#455364;border-radius:0 0 4px 4px"></div>
<div class="a" style="left:2074px;top:647px;width:52.6px;height:22.7px;background:#455364;border-radius:0 0 4px 4px"></div>
<div class="a" style="left:2128.7px;top:647px;width:53.3px;height:22.7px;background:#455364;border-radius:0 0 4px 4px"></div>
<div class="a" style="left:1868.5px;top:648.39px;font-size:17.5px;line-height:21px;font-family:'Liberation Serif',serif;color:#e0e1e3;white-space:pre;"><span style="display:inline-block;width:9px;text-align:center"><span style="display:inline-block;transform:scaleX(0.665);">H</span></span><span style="display:inline-block;width:9px;text-align:center"><span style="display:inline-block;">e</span></span><span style="display:inline-block;width:9px;text-align:center"><span style="display:inline-block;">l</span></span><span style="display:inline-block;width:9px;text-align:center"><span style="display:inline-block;transform:scaleX(0.960);">p</span></span></div>
<div class="a" style="left:1915px;top:648.39px;font-size:17.5px;line-height:21px;font-family:'Liberation Serif',serif;color:#e0e1e3;white-space:pre;"><span style="display:inline-block;width:9px;text-align:center"><span style="display:inline-block;transform:scaleX(0.665);">V</span></span><span style="display:inline-block;width:9px;text-align:center"><span style="display:inline-block;">a</span></span><span style="display:inline-block;width:9px;text-align:center"><span style="display:inline-block;">r</span></span><span style="display:inline-block;width:9px;text-align:center"><span style="display:inline-block;">i</span></span><span style="display:inline-block;width:9px;text-align:center"><span style="display:inline-block;">a</span></span><span style="display:inline-block;width:9px;text-align:center"><span style="display:inline-block;transform:scaleX(0.960);">b</span></span><span style="display:inline-block;width:9px;text-align:center"><span style="display:inline-block;">l</span></span><span style="display:inline-block;width:9px;text-align:center"><span style="display:inline-block;">e</span></span><span style="display:inline-block;width:9px"></span><span style="display:inline-block;width:9px;text-align:center"><span style="display:inline-block;transform:scaleX(0.786);">E</span></span><span style="display:inline-block;width:9px;text-align:center"><span style="display:inline-block;transform:scaleX(0.960);">x</span></span><span style="display:inline-block;width:9px;text-align:center"><span style="display:inline-block;transform:scaleX(0.960);">p</span></span><span style="display:inline-block;width:9px;text-align:center"><span style="display:inline-block;">l</span></span><span style="display:inline-block;width:9px;text-align:center"><span style="display:inline-block;transform:scaleX(0.960);">o</span></span><span style="display:inline-block;width:9px;text-align:center"><span style="display:inline-block;">r</span></span><span style="display:inline-block;width:9px;text-align:center"><span style="display:inline-block;">e</span></span><span style="display:inline-block;width:9px;text-align:center"><span style="display:inline-block;">r</span></span></div>
<div class="a" style="left:2077.5px;top:648.39px;font-size:17.5px;line-height:21px;font-family:'Liberation Serif',serif;color:#e0e1e3;white-space:pre;"><span style="display:inline-block;width:9px;text-align:center"><span style="display:inline-block;transform:scaleX(0.863);">P</span></span><span style="display:inline-block;width:9px;text-align:center"><span style="display:inline-block;">l</span></span><span style="display:inline-block;width:9px;text-align:center"><span style="display:inline-block;transform:scaleX(0.960);">o</span></span><span style="display:inline-block;width:9px;text-align:center"><span style="display:inline-block;">t</span></span><span style="display:inline-block;width:9px;text-align:center"><span style="display:inline-block;">s</span></span></div>
<div class="a" style="left:2132px;top:648.39px;font-size:17.5px;line-height:21px;font-family:'Liberation Serif',serif;color:#e0e1e3;white-space:pre;"><span style="display:inline-block;width:9px;text-align:center"><span style="display:inline-block;transform:scaleX(0.863);">F</span></span><span style="display:inline-block;width:9px;text-align:center"><span style="display:inline-block;">i</span></span><span style="display:inline-block;width:9px;text-align:center"><span style="display:inline-block;">l</span></span><span style="display:inline-block;width:9px;text-align:center"><span style="display:inline-block;">e</span></span><span style="display:inline-block;width:9px;text-align:center"><span style="display:inline-block;">s</span></span></div>
<div class="a" style="left:1485px;top:672px;width:1074px;height:7px;background:#455364;"></div>
<div class="a" style="left:1485px;top:679px;width:1074px;height:818px;background:#19232d;"></div>
<svg class="a" style="left:0;top:0" width="2559" height="1539" viewBox="0 0 2559 1539"><rect x="1499.7" y="695" width="17.6" height="14" rx="1.3" stroke="#f2f2f2" stroke-width="2" fill="none"/>
<rect x="1508" y="694.5" width="9.5" height="4" fill="#f2f2f2"/>
<path d="M2430.5 697 H2439.5 V707.5 a1 1 0 0 1 -1 1 H2431.5 a1 1 0 0 1 -1 -1Z M2429 695.2 H2441 M2433 693.8 H2437" stroke="#f0f0f0" stroke-width="1.5" fill="#f0f0f0"/>
<rect x="2482.6" y="698" width="7.4" height="7.4" fill="#6f6f6f"/>
<path d="M2533 698.6 H2544.3 M2533 701.8 H2544.3 M2533 705 H2544.3" stroke="#f5f5f5" stroke-width="1.3"/>
</svg>
<div class="a" style="left:1535px;top:693px;width:141px;height:34px;background:#5b6b7d;border-radius:4px 4px 0 0"></div>
<div class="a" style="left:1535px;top:724px;width:141px;height:3px;background:#259ae9;"></div>
<div class="a" style="left:1545.2px;top:698.49px;font-size:17.5px;line-height:21px;font-family:'Liberation Serif',serif;color:#e0e1e3;white-space:pre;"><span style="display:inline-block;width:9px;text-align:center"><span style="display:inline-block;transform:scaleX(0.720);">C</span></span><span style="display:inline-block;width:9px;text-align:center"><span style="display:inline-block;transform:scaleX(0.960);">o</span></span><span style="display:inline-block;width:9px;text-align:center"><span style="display:inline-block;transform:scaleX(0.960);">n</span></span><span style="display:inline-block;width:9px;text-align:center"><span style="display:inline-block;">s</span></span><span style="display:inline-block;width:9px;text-align:center"><span style="display:inline-block;transform:scaleX(0.960);">o</span></span><span style="display:inline-block;width:9px;text-align:center"><span style="display:inline-block;">l</span></span><span style="display:inline-block;width:9px;text-align:center"><span style="display:inline-block;">e</span></span><span style="display:inline-block;width:9px"></span><span style="display:inline-block;width:9px;text-align:center"><span style="display:inline-block;transform:scaleX(0.960);">1</span></span><span style="display:inline-block;width:9px;text-align:center"><span style="display:inline-block;">/</span></span><span style="display:inline-block;width:9px;text-align:center"><span style="display:inline-block;transform:scaleX(0.665);">A</span></span></div>
<svg class="a" style="left:0;top:0" width="2559" height="1539" viewBox="0 0 2559 1539"><path d="M1652.5 701.5 L1665.5 714.5 M1665.5 701.5 L1652.5 714.5" stroke="#e6e6e6" stroke-width="1.7"/></svg>
<div class="a" style="left:1487px;top:727px;width:1071px;height:742.5px;background:transparent;border:1px solid #455364;border-radius:4px"></div>
<div class="a" style="left:1488px;top:728.5px;width:1050px;height:740px;overflow:hidden">
<div class="a" style="left:5px;top:-24.30px;font-size:38.7px;line-height:46px;font-family:'Liberation Mono',monospace;color:#ffffff;white-space:pre;letter-spacing:-1.2px;"><span style="color:#00ff00;">In [</span><span style="color:#00ff00;font-weight:bold;">14</span><span style="color:#00ff00;">]:</span><span style="color:#ffffff;"> runfile(</span><span style="color:#b0e686;font-style:italic;">&#x27;D:/</span><span style="color:#b0e686;font-style:italic;letter-spacing:1.2px">作业</span><span style="color:#b0e686;font-style:italic;">/PYTHON</span><span style="color:#b0e686;font-style:italic;letter-spacing:1.2px">课程</span><span style="color:#b0e686;font-style:italic;">/</span><span style="color:#b0e686;font-style:italic;letter-spacing:1.2px">大二上</span><span style="color:#b0e686;font-style:italic;">/</span><span style="color:#b0e686;font-style:italic;letter-spacing:1.2px">课后</span></div>
<div class="a" style="left:5px;top:29.40px;font-size:38.7px;line-height:46px;font-family:'Liberation Mono',monospace;color:#ffffff;white-space:pre;letter-spacing:-1.2px;"><span style="color:#b0e686;font-style:italic;letter-spacing:1.2px">习题</span><span style="color:#b0e686;font-style:italic;">/</span><span style="color:#b0e686;font-style:italic;letter-spacing:1.2px">习题</span><span style="color:#b0e686;font-style:italic;">9.4.py&#x27;</span><span style="color:#ffffff;">, wdir=</span><span style="color:#b0e686;font-style:italic;">&#x27;D:/</span><span style="color:#b0e686;font-style:italic;letter-spacing:1.2px">作业</span><span style="color:#b0e686;font-style:italic;">/PYTHON</span><span style="color:#b0e686;font-style:italic;letter-spacing:1.2px">课程</span><span style="color:#b0e686;font-style:italic;">/</span><span style="color:#b0e686;font-style:italic;letter-spacing:1.2px">大二</span></div>
<div class="a" style="left:5px;top:83.20px;font-size:38.7px;line-height:46px;font-family:'Liberation Mono',monospace;color:#ffffff;white-space:pre;letter-spacing:-1.2px;"><span style="color:#b0e686;font-style:italic;letter-spacing:1.2px">上</span><span style="color:#b0e686;font-style:italic;">/</span><span style="color:#b0e686;font-style:italic;letter-spacing:1.2px">课后习题</span><span style="color:#b0e686;font-style:italic;">&#x27;</span><span style="color:#ffffff;">)</span></div>
<div class="a" style="left:5px;top:134.60px;font-size:38.7px;line-height:46px;font-family:'Liberation Mono',monospace;color:#ffffff;white-space:pre;letter-spacing:-1.2px;"><span style="color:#ffffff;">               df      sum_sq    mean_sq</span></div>
<div class="a" style="left:5px;top:182.10px;font-size:38.7px;line-height:46px;font-family:'Liberation Mono',monospace;color:#ffffff;white-space:pre;letter-spacing:-1.2px;"><span style="color:#ffffff;">F        PR(&gt;F)</span></div>
<div class="a" style="left:5px;top:229.10px;font-size:38.7px;line-height:46px;font-family:'Liberation Mono',monospace;color:#ffffff;white-space:pre;letter-spacing:-1.2px;"><span style="color:#ffffff;">C(x1)         2.0   13.166667   6.583333</span></div>
<div class="a" style="left:5px;top:275.70px;font-size:38.7px;line-height:46px;font-family:'Liberation Mono',monospace;color:#ffffff;white-space:pre;letter-spacing:-1.2px;"><span style="color:#ffffff;">5.266667  1.269617e-02</span></div>
<div class="a" style="left:5px;top:321.30px;font-size:38.7px;line-height:46px;font-family:'Liberation Mono',monospace;color:#ffffff;white-space:pre;letter-spacing:-1.2px;"><span style="color:#ffffff;">C(x2)         3.0  125.000000  41.666667</span></div>
<div class="a" style="left:5px;top:368.40px;font-size:38.7px;line-height:46px;font-family:'Liberation Mono',monospace;color:#ffffff;white-space:pre;letter-spacing:-1.2px;"><span style="color:#ffffff;">33.333333  1.009190e-08</span></div>
<div class="a" style="left:5px;top:415.50px;font-size:38.7px;line-height:46px;font-family:'Liberation Mono',monospace;color:#ffffff;white-space:pre;letter-spacing:-1.2px;"><span style="color:#ffffff;">C(x1):C(x2)   6.0   68.833333  11.472222</span></div>
<div class="a" style="left:5px;top:462.60px;font-size:38.7px;line-height:46px;font-family:'Liberation Mono',monospace;color:#ffffff;white-space:pre;letter-spacing:-1.2px;"><span style="color:#ffffff;">9.177778  2.887221e-05</span></div>
<div class="a" style="left:5px;top:509.70px;font-size:38.7px;line-height:46px;font-family:'Liberation Mono',monospace;color:#ffffff;white-space:pre;letter-spacing:-1.2px;"><span style="color:#ffffff;">Residual     24.0   30.000000   1.250000</span></div>
<div class="a" style="left:5px;top:556.80px;font-size:38.7px;line-height:46px;font-family:'Liberation Mono',monospace;color:#ffffff;white-space:pre;letter-spacing:-1.2px;"><span style="color:#ffffff;">NaN           NaN</span></div>
<div class="a" style="left:5px;top:603.70px;font-size:38.7px;line-height:46px;font-family:'Liberation Mono',monospace;color:#ffffff;white-space:pre;letter-spacing:-1.2px;"><span style="color:#ffffff;letter-spacing:1.2px">总偏差平方和</span><span style="color:#ffffff;">: 236.99999999999915</span></div>
<div class="a" style="left:5px;top:705.50px;font-size:38.7px;line-height:46px;font-family:'Liberation Mono',monospace;color:#ffffff;white-space:pre;letter-spacing:-1.2px;"><span style="color:#00ff00;">In [</span><span style="color:#00ff00;font-weight:bold;">15</span><span style="color:#00ff00;">]:</span></div>
</div>
<div class="a" style="left:2540px;top:745px;width:13.5px;height:705px;background:transparent;border:1px solid #455364;border-radius:6px"></div>
<div class="a" style="left:2543px;top:1409px;width:8px;height:19.6px;background:#60798b;border-radius:4px"></div>
<svg class="a" style="left:0;top:0" width="2559" height="1539" viewBox="0 0 2559 1539"><path d="M2541.5 743 H2552 L2546.7 737.5Z" fill="#455364"/><path d="M2541.5 1455.8 H2552 L2546.7 1461Z" fill="#455364"/></svg>
<div class="a" style="left:1916px;top:1471.3px;width:142.5px;height:24.2px;background:#54687a;"></div>
<div class="a" style="left:1916px;top:1471.3px;width:142.5px;height:3px;background:#259ae9;"></div>
<div class="a" style="left:2060.8px;top:1473.5px;width:70.8px;height:22px;background:#455364;border-radius:0 0 4px 4px"></div>
<div class="a" style="left:1921px;top:1475.09px;font-size:17.5px;line-height:21px;font-family:'Liberation Serif',serif;color:#e0e1e3;white-space:pre;"><span style="display:inline-block;width:9px;text-align:center"><span style="display:inline-block;">I</span></span><span style="display:inline-block;width:9px;text-align:center"><span style="display:inline-block;transform:scaleX(0.863);">P</span></span><span style="display:inline-block;width:9px;text-align:center"><span style="display:inline-block;transform:scaleX(0.960);">y</span></span><span style="display:inline-block;width:9px;text-align:center"><span style="display:inline-block;">t</span></span><span style="display:inline-block;width:9px;text-align:center"><span style="display:inline-block;transform:scaleX(0.960);">h</span></span><span style="display:inline-block;width:9px;text-align:center"><span style="display:inline-block;transform:scaleX(0.960);">o</span></span><span style="display:inline-block;width:9px;text-align:center"><span style="display:inline-block;transform:scaleX(0.960);">n</span></span><span style="display:inline-block;width:9px"></span><span style="display:inline-block;width:9px;text-align:center"><span style="display:inline-block;transform:scaleX(0.720);">C</span></span><span style="display:inline-block;width:9px;text-align:center"><span style="display:inline-block;transform:scaleX(0.960);">o</span></span><span style="display:inline-block;width:9px;text-align:center"><span style="display:inline-block;transform:scaleX(0.960);">n</span></span><span style="display:inline-block;width:9px;text-align:center"><span style="display:inline-block;">s</span></span><span style="display:inline-block;width:9px;text-align:center"><span style="display:inline-block;transform:scaleX(0.960);">o</span></span><span style="display:inline-block;width:9px;text-align:center"><span style="display:inline-block;">l</span></span><span style="display:inline-block;width:9px;text-align:center"><span style="display:inline-block;">e</span></span></div>
<div class="a" style="left:2064.5px;top:1475.09px;font-size:17.5px;line-height:21px;font-family:'Liberation Serif',serif;color:#e0e1e3;white-space:pre;"><span style="display:inline-block;width:9px;text-align:center"><span style="display:inline-block;transform:scaleX(0.665);">H</span></span><span style="display:inline-block;width:9px;text-align:center"><span style="display:inline-block;">i</span></span><span style="display:inline-block;width:9px;text-align:center"><span style="display:inline-block;">s</span></span><span style="display:inline-block;width:9px;text-align:center"><span style="display:inline-block;">t</span></span><span style="display:inline-block;width:9px;text-align:center"><span style="display:inline-block;transform:scaleX(0.960);">o</span></span><span style="display:inline-block;width:9px;text-align:center"><span style="display:inline-block;">r</span></span><span style="display:inline-block;width:9px;text-align:center"><span style="display:inline-block;transform:scaleX(0.960);">y</span></span></div>
<div class="a" style="left:0px;top:1497.5px;width:2559px;height:30.5px;background:#455364;"></div>
<div class="a" style="left:0px;top:1528px;width:2559px;height:11px;background:linear-gradient(90deg,#efdfd9 0%,#e4e2e6 6%,#dce5ef 9%,#ebe0de 14%,#efdfda 30%,#eedfdc 55%,#f5e5dc 75%,#f8ead8 82%,#f6e8d6 87%,#dce9f2 91%,#d9e8f3 100%);"></div>
<div class="a" style="left:1624px;top:1502.29px;font-size:17.5px;line-height:21px;font-family:'Liberation Serif',serif;color:#e0e1e3;white-space:pre;"><span style="display:inline-block;width:9px;text-align:center"><span style="display:inline-block;">c</span></span><span style="display:inline-block;width:9px;text-align:center"><span style="display:inline-block;transform:scaleX(0.960);">o</span></span><span style="display:inline-block;width:9px;text-align:center"><span style="display:inline-block;transform:scaleX(0.960);">n</span></span><span style="display:inline-block;width:9px;text-align:center"><span style="display:inline-block;transform:scaleX(0.960);">d</span></span><span style="display:inline-block;width:9px;text-align:center"><span style="display:inline-block;">a</span></span><span style="display:inline-block;width:9px"></span><span style="display:inline-block;width:9px;text-align:center"><span style="display:inline-block;">(</span></span><span style="display:inline-block;width:9px;text-align:center"><span style="display:inline-block;transform:scaleX(0.863);">P</span></span><span style="display:inline-block;width:9px;text-align:center"><span style="display:inline-block;transform:scaleX(0.960);">y</span></span><span style="display:inline-block;width:9px;text-align:center"><span style="display:inline-block;">t</span></span><span style="display:inline-block;width:9px;text-align:center"><span style="display:inline-block;transform:scaleX(0.960);">h</span></span><span style="display:inline-block;width:9px;text-align:center"><span style="display:inline-block;transform:scaleX(0.960);">o</span></span><span style="display:inline-block;width:9px;text-align:center"><span style="display:inline-block;transform:scaleX(0.960);">n</span></span><span style="display:inline-block;width:9px"></span><span style="display:inline-block;width:9px;text-align:center"><span style="display:inline-block;transform:scaleX(0.960);">3</span></span><span style="display:inline-block;width:9px;text-align:left"><span style="display:inline-block;">.</span></span><span style="display:inline-block;width:9px;text-align:center"><span style="display:inline-block;transform:scaleX(0.960);">1</span></span><span style="display:inline-block;width:9px;text-align:center"><span style="display:inline-block;transform:scaleX(0.960);">1</span></span><span style="display:inline-block;width:9px;text-align:left"><span style="display:inline-block;">.</span></span><span style="display:inline-block;width:9px;text-align:center"><span style="display:inline-block;transform:scaleX(0.960);">5</span></span><span style="display:inline-block;width:9px;text-align:center"><span style="display:inline-block;">)</span></span></div>
<div class="a" style="left:1851.8px;top:1502.29px;font-size:17.5px;line-height:21px;font-family:'Liberation Serif',serif;color:#e0e1e3;white-space:pre;"><span style="display:inline-block;width:9px;text-align:center"><span style="display:inline-block;transform:scaleX(0.720);">C</span></span><span style="display:inline-block;width:9px;text-align:center"><span style="display:inline-block;transform:scaleX(0.960);">o</span></span><span style="display:inline-block;width:9px;text-align:center"><span style="display:inline-block;transform:scaleX(0.617);">m</span></span><span style="display:inline-block;width:9px;text-align:center"><span style="display:inline-block;transform:scaleX(0.960);">p</span></span><span style="display:inline-block;width:9px;text-align:center"><span style="display:inline-block;">l</span></span><span style="display:inline-block;width:9px;text-align:center"><span style="display:inline-block;">e</span></span><span style="display:inline-block;width:9px;text-align:center"><span style="display:inline-block;">t</span></span><span style="display:inline-block;width:9px;text-align:center"><span style="display:inline-block;">i</span></span><span style="display:inline-block;width:9px;text-align:center"><span style="display:inline-block;transform:scaleX(0.960);">o</span></span><span style="display:inline-block;width:9px;text-align:center"><span style="display:inline-block;transform:scaleX(0.960);">n</span></span><span style="display:inline-block;width:9px;text-align:center"><span style="display:inline-block;">s</span></span><span style="display:inline-block;width:9px;text-align:center"><span style="display:inline-block;">:</span></span><span style="display:inline-block;width:9px"></span><span style="display:inline-block;width:9px;text-align:center"><span style="display:inline-block;">c</span></span><span style="display:inline-block;width:9px;text-align:center"><span style="display:inline-block;transform:scaleX(0.960);">o</span></span><span style="display:inline-block;width:9px;text-align:center"><span style="display:inline-block;transform:scaleX(0.960);">n</span></span><span style="display:inline-block;width:9px;text-align:center"><span style="display:inline-block;transform:scaleX(0.960);">d</span></span><span style="display:inline-block;width:9px;text-align:center"><span style="display:inline-block;">a</span></span></div>
<div class="a" style="left:2052.7px;top:1502.29px;font-size:17.5px;line-height:21px;font-family:'Liberation Serif',serif;color:#e0e1e3;white-space:pre;"><span style="display:inline-block;width:9px;text-align:center"><span style="display:inline-block;transform:scaleX(0.786);">L</span></span><span style="display:inline-block;width:9px;text-align:center"><span style="display:inline-block;transform:scaleX(0.863);">S</span></span><span style="display:inline-block;width:9px;text-align:center"><span style="display:inline-block;transform:scaleX(0.863);">P</span></span><span style="display:inline-block;width:9px;text-align:center"><span style="display:inline-block;">:</span></span><span style="display:inline-block;width:9px"></span><span style="display:inline-block;width:9px;text-align:center"><span style="display:inline-block;transform:scaleX(0.863);">P</span></span><span style="display:inline-block;width:9px;text-align:center"><span style="display:inline-block;transform:scaleX(0.960);">y</span></span><span style="display:inline-block;width:9px;text-align:center"><span style="display:inline-block;">t</span></span><span style="display:inline-block;width:9px;text-align:center"><span style="display:inline-block;transform:scaleX(0.960);">h</span></span><span style="display:inline-block;width:9px;text-align:center"><span style="display:inline-block;transform:scaleX(0.960);">o</span></span><span style="display:inline-block;width:9px;text-align:center"><span style="display:inline-block;transform:scaleX(0.960);">n</span></span></div>
<div class="a" style="left:2170.4px;top:1502.29px;font-size:17.5px;line-height:21px;font-family:'Liberation Serif',serif;color:#e0e1e3;white-space:pre;"><span style="display:inline-block;width:9px;text-align:center"><span style="display:inline-block;transform:scaleX(0.786);">L</span></span><span style="display:inline-block;width:9px;text-align:center"><span style="display:inline-block;">i</span></span><span style="display:inline-block;width:9px;text-align:center"><span style="display:inline-block;transform:scaleX(0.960);">n</span></span><span style="display:inline-block;width:9px;text-align:center"><span style="display:inline-block;">e</span></span><span style="display:inline-block;width:9px"></span><span style="display:inline-block;width:9px;text-align:center"><span style="display:inline-block;transform:scaleX(0.960);">1</span></span><span style="display:inline-block;width:9px;text-align:center"><span style="display:inline-block;transform:scaleX(0.960);">4</span></span><span style="display:inline-block;width:9px;text-align:left"><span style="display:inline-block;">,</span></span><span style="display:inline-block;width:9px"></span><span style="display:inline-block;width:9px;text-align:center"><span style="display:inline-block;transform:scaleX(0.720);">C</span></span><span style="display:inline-block;width:9px;text-align:center"><span style="display:inline-block;transform:scaleX(0.960);">o</span></span><span style="display:inline-block;width:9px;text-align:center"><span style="display:inline-block;">l</span></span><span style="display:inline-block;width:9px"></span><span style="display:inline-block;width:9px;text-align:center"><span style="display:inline-block;transform:scaleX(0.960);">2</span></span><span style="display:inline-block;width:9px;text-align:center"><span style="display:inline-block;transform:scaleX(0.960);">6</span></span></div>
<div class="a" style="left:2324.7px;top:1502.29px;font-size:17.5px;line-height:21px;font-family:'Liberation Serif',serif;color:#e0e1e3;white-space:pre;"><span style="display:inline-block;width:9px;text-align:center"><span style="display:inline-block;transform:scaleX(0.665);">U</span></span><span style="display:inline-block;width:9px;text-align:center"><span style="display:inline-block;transform:scaleX(0.786);">T</span></span><span style="display:inline-block;width:9px;text-align:center"><span style="display:inline-block;transform:scaleX(0.863);">F</span></span><span style="display:inline-block;width:9px;text-align:center"><span style="display:inline-block;">-</span></span><span style="display:inline-block;width:9px;text-align:center"><span style="display:inline-block;transform:scaleX(0.960);">8</span></span></div>
<div class="a" style="left:2388.8px;top:1502.29px;font-size:17.5px;line-height:21px;font-family:'Liberation Serif',serif;color:#e0e1e3;white-space:pre;"><span style="display:inline-block;width:9px;text-align:center"><span style="display:inline-block;transform:scaleX(0.720);">C</span></span><span style="display:inline-block;width:9px;text-align:center"><span style="display:inline-block;transform:scaleX(0.720);">R</span></span><span style="display:inline-block;width:9px;text-align:center"><span style="display:inline-block;transform:scaleX(0.786);">L</span></span><span style="display:inline-block;width:9px;text-align:center"><span style="display:inline-block;transform:scaleX(0.863);">F</span></span></div>
<div class="a" style="left:2444px;top:1502.29px;font-size:17.5px;line-height:21px;font-family:'Liberation Serif',serif;color:#e0e1e3;white-space:pre;"><span style="display:inline-block;width:9px;text-align:center"><span style="display:inline-block;transform:scaleX(0.720);">R</span></span><span style="display:inline-block;width:9px;text-align:center"><span style="display:inline-block;transform:scaleX(0.509);">W</span></span></div>
<div class="a" style="left:2489.8px;top:1502.29px;font-size:17.5px;line-height:21px;font-family:'Liberation Serif',serif;color:#e0e1e3;white-space:pre;"><span style="display:inline-block;width:9px;text-align:center"><span style="display:inline-block;transform:scaleX(0.540);">M</span></span><span style="display:inline-block;width:9px;text-align:center"><span style="display:inline-block;">e</span></span><span style="display:inline-block;width:9px;text-align:center"><span style="display:inline-block;transform:scaleX(0.617);">m</span></span><span style="display:inline-block;width:9px"></span><span style="display:inline-block;width:9px;text-align:center"><span style="display:inline-block;transform:scaleX(0.960);">6</span></span><span style="display:inline-block;width:9px;text-align:center"><span style="display:inline-block;transform:scaleX(0.960);">5</span></span><span style="display:inline-block;width:9px;text-align:center"><span style="display:inline-block;transform:scaleX(0.576);">%</span></span></div>
<svg class="a" style="left:0;top:0" width="2559" height="1539" viewBox="0 0 2559 1539"><path d="M2030.5 1511.5 L2034.5 1515.5 L2041 1507" stroke="#e0e1e3" stroke-width="1.4" fill="none"/>
<path d="M1831 1508 L1835.5 1512.5 L1840 1508 M1834 1516 L1837.5 1512.5" stroke="#e0e1e3" stroke-width="1.3" fill="none"/></svg>
<div class="a" style="left:1624px;top:1502.29px;font-size:17.5px;line-height:21px;font-family:'Liberation Serif',serif;color:#e0e1e3;white-space:pre;"><span style="display:inline-block;width:9px;text-align:center"><span style="display:inline-block;">c</span></span><span style="display:inline-block;width:9px;text-align:center"><span style="display:inline-block;transform:scaleX(0.960);">o</span></span><span style="display:inline-block;width:9px;text-align:center"><span style="display:inline-block;transform:scaleX(0.960);">n</span></span><span style="display:inline-block;width:9px;text-align:center"><span style="display:inline-block;transform:scaleX(0.960);">d</span></span><span style="display:inline-block;width:9px;text-align:center"><span style="display:inline-block;">a</span></span><span style="display:inline-block;width:9px"></span><span style="display:inline-block;width:9px;text-align:center"><span style="display:inline-block;">(</span></span><span style="display:inline-block;width:9px;text-align:center"><span style="display:inline-block;transform:scaleX(0.863);">P</span></span><span style="display:inline-block;width:9px;text-align:center"><span style="display:inline-block;transform:scaleX(0.960);">y</span></span><span style="display:inline-block;width:9px;text-align:center"><span style="display:inline-block;">t</span></span><span style="display:inline-block;width:9px;text-align:center"><span style="display:inline-block;transform:scaleX(0.960);">h</span></span><span style="display:inline-block;width:9px;text-align:center"><span style="display:inline-block;transform:scaleX(0.960);">o</span></span><span style="display:inline-block;width:9px;text-align:center"><span style="display:inline-block;transform:scaleX(0.960);">n</span></span><span style="display:inline-block;width:9px"></span><span style="display:inline-block;width:9px;text-align:center"><span style="display:inline-block;transform:scaleX(0.960);">3</span></span><span style="display:inline-block;width:9px;text-align:left"><span style="display:inline-block;">.</span></span><span style="display:inline-block;width:9px;text-align:center"><span style="display:inline-block;transform:scaleX(0.960);">1</span></span><span style="display:inline-block;width:9px;text-align:center"><span style="display:inline-block;transform:scaleX(0.960);">1</span></span><span style="display:inline-block;width:9px;text-align:left"><span style="display:inline-block;">.</span></span><span style="display:inline-block;width:9px;text-align:center"><span style="display:inline-block;transform:scaleX(0.960);">5</span></span><span style="display:inline-block;width:9px;text-align:center"><span style="display:inline-block;">)</span></span></div>
<div class="a" style="left:1851.8px;top:1502.29px;font-size:17.5px;line-height:21px;font-family:'Liberation Serif',serif;color:#e0e1e3;white-space:pre;"><span style="display:inline-block;width:9px;text-align:center"><span style="display:inline-block;transform:scaleX(0.720);">C</span></span><span style="display:inline-block;width:9px;text-align:center"><span style="display:inline-block;transform:scaleX(0.960);">o</span></span><span style="display:inline-block;width:9px;text-align:center"><span style="display:inline-block;transform:scaleX(0.617);">m</span></span><span style="display:inline-block;width:9px;text-align:center"><span style="display:inline-block;transform:scaleX(0.960);">p</span></span><span style="display:inline-block;width:9px;text-align:center"><span style="display:inline-block;">l</span></span><span style="display:inline-block;width:9px;text-align:center"><span style="display:inline-block;">e</span></span><span style="display:inline-block;width:9px;text-align:center"><span style="display:inline-block;">t</span></span><span style="display:inline-block;width:9px;text-align:center"><span style="display:inline-block;">i</span></span><span style="display:inline-block;width:9px;text-align:center"><span style="display:inline-block;transform:scaleX(0.960);">o</span></span><span style="display:inline-block;width:9px;text-align:center"><span style="display:inline-block;transform:scaleX(0.960);">n</span></span><span style="display:inline-block;width:9px;text-align:center"><span style="display:inline-block;">s</span></span><span style="display:inline-block;width:9px;text-align:center"><span style="display:inline-block;">:</span></span><span style="display:inline-block;width:9px"></span><span style="display:inline-block;width:9px;text-align:center"><span style="display:inline-block;">c</span></span><span style="display:inline-block;width:9px;text-align:center"><span style="display:inline-block;transform:scaleX(0.960);">o</span></span><span style="display:inline-block;width:9px;text-align:center"><span style="display:inline-block;transform:scaleX(0.960);">n</span></span><span style="display:inline-block;width:9px;text-align:center"><span style="display:inline-block;transform:scaleX(0.960);">d</span></span><span style="display:inline-block;width:9px;text-align:center"><span style="display:inline-block;">a</span></span></div>
<div class="a" style="left:2052.7px;top:1502.29px;font-size:17.5px;line-height:21px;font-family:'Liberation Serif',serif;color:#e0e1e3;white-space:pre;"><span style="display:inline-block;width:9px;text-align:center"><span style="display:inline-block;transform:scaleX(0.786);">L</span></span><span style="display:inline-block;width:9px;text-align:center"><span style="display:inline-block;transform:scaleX(0.863);">S</span></span><span style="display:inline-block;width:9px;text-align:center"><span style="display:inline-block;transform:scaleX(0.863);">P</span></span><span style="display:inline-block;width:9px;text-align:center"><span style="display:inline-block;">:</span></span><span style="display:inline-block;width:9px"></span><span style="display:inline-block;width:9px;text-align:center"><span style="display:inline-block;transform:scaleX(0.863);">P</span></span><span style="display:inline-block;width:9px;text-align:center"><span style="display:inline-block;transform:scaleX(0.960);">y</span></span><span style="display:inline-block;width:9px;text-align:center"><span style="display:inline-block;">t</span></span><span style="display:inline-block;width:9px;text-align:center"><span style="display:inline-block;transform:scaleX(0.960);">h</span></span><span style="display:inline-block;width:9px;text-align:center"><span style="display:inline-block;transform:scaleX(0.960);">o</span></span><span style="display:inline-block;width:9px;text-align:center"><span style="display:inline-block;transform:scaleX(0.960);">n</span></span></div>
<div class="a" style="left:2170.4px;top:1502.29px;font-size:17.5px;line-height:21px;font-family:'Liberation Serif',serif;color:#e0e1e3;white-space:pre;"><span style="display:inline-block;width:9px;text-align:center"><span style="display:inline-block;transform:scaleX(0.786);">L</span></span><span style="display:inline-block;width:9px;text-align:center"><span style="display:inline-block;">i</span></span><span style="display:inline-block;width:9px;text-align:center"><span style="display:inline-block;transform:scaleX(0.960);">n</span></span><span style="display:inline-block;width:9px;text-align:center"><span style="display:inline-block;">e</span></span><span style="display:inline-block;width:9px"></span><span style="display:inline-block;width:9px;text-align:center"><span style="display:inline-block;transform:scaleX(0.960);">1</span></span><span style="display:inline-block;width:9px;text-align:center"><span style="display:inline-block;transform:scaleX(0.960);">4</span></span><span style="display:inline-block;width:9px;text-align:left"><span style="display:inline-block;">,</span></span><span style="display:inline-block;width:9px"></span><span style="display:inline-block;width:9px;text-align:center"><span style="display:inline-block;transform:scaleX(0.720);">C</span></span><span style="display:inline-block;width:9px;text-align:center"><span style="display:inline-block;transform:scaleX(0.960);">o</span></span><span style="display:inline-block;width:9px;text-align:center"><span style="display:inline-block;">l</span></span><span style="display:inline-block;width:9px"></span><span style="display:inline-block;width:9px;text-align:center"><span style="display:inline-block;transform:scaleX(0.960);">2</span></span><span style="display:inline-block;width:9px;text-align:center"><span style="display:inline-block;transform:scaleX(0.960);">6</span></span></div>
<div class="a" style="left:2324.7px;top:1502.29px;font-size:17.5px;line-height:21px;font-family:'Liberation Serif',serif;color:#e0e1e3;white-space:pre;"><span style="display:inline-block;width:9px;text-align:center"><span style="display:inline-block;transform:scaleX(0.665);">U</span></span><span style="display:inline-block;width:9px;text-align:center"><span style="display:inline-block;transform:scaleX(0.786);">T</span></span><span style="display:inline-block;width:9px;text-align:center"><span style="display:inline-block;transform:scaleX(0.863);">F</span></span><span style="display:inline-block;width:9px;text-align:center"><span style="display:inline-block;">-</span></span><span style="display:inline-block;width:9px;text-align:center"><span style="display:inline-block;transform:scaleX(0.960);">8</span></span></div>
<div class="a" style="left:2388.8px;top:1502.29px;font-size:17.5px;line-height:21px;font-family:'Liberation Serif',serif;color:#e0e1e3;white-space:pre;"><span style="display:inline-block;width:9px;text-align:center"><span style="display:inline-block;transform:scaleX(0.720);">C</span></span><span style="display:inline-block;width:9px;text-align:center"><span style="display:inline-block;transform:scaleX(0.720);">R</span></span><span style="display:inline-block;width:9px;text-align:center"><span style="display:inline-block;transform:scaleX(0.786);">L</span></span><span style="display:inline-block;width:9px;text-align:center"><span style="display:inline-block;transform:scaleX(0.863);">F</span></span></div>
<div class="a" style="left:2444px;top:1502.29px;font-size:17.5px;line-height:21px;font-family:'Liberation Serif',serif;color:#e0e1e3;white-space:pre;"><span style="display:inline-block;width:9px;text-align:center"><span style="display:inline-block;transform:scaleX(0.720);">R</span></span><span style="display:inline-block;width:9px;text-align:center"><span style="display:inline-block;transform:scaleX(0.509);">W</span></span></div>
<div class="a" style="left:2489.8px;top:1502.29px;font-size:17.5px;line-height:21px;font-family:'Liberation Serif',serif;color:#e0e1e3;white-space:pre;"><span style="display:inline-block;width:9px;text-align:center"><span style="display:inline-block;transform:scaleX(0.540);">M</span></span><span style="display:inline-block;width:9px;text-align:center"><span style="display:inline-block;">e</span></span><span style="display:inline-block;width:9px;text-align:center"><span style="display:inline-block;transform:scaleX(0.617);">m</span></span><span style="display:inline-block;width:9px"></span><span style="display:inline-block;width:9px;text-align:center"><span style="display:inline-block;transform:scaleX(0.960);">6</span></span><span style="display:inline-block;width:9px;text-align:center"><span style="display:inline-block;transform:scaleX(0.960);">5</span></span><span style="display:inline-block;width:9px;text-align:center"><span style="display:inline-block;transform:scaleX(0.576);">%</span></span></div>
<svg class="a" style="left:0;top:0" width="2559" height="1539" viewBox="0 0 2559 1539"><path d="M2030.5 1511.5 L2034.5 1515.5 L2041 1507" stroke="#e0e1e3" stroke-width="1.4" fill="none"/><path d="M1831 1508 L1835.5 1512.5 L1840 1508 M1834 1516 L1837.5 1512.5" stroke="#e0e1e3" stroke-width="1.3" fill="none"/></svg>
<div class="a" style="left:0px;top:1528px;width:2559px;height:1.2px;background:#c9bfb8;"></div>
<div class="a" style="left:1449.6px;top:1534px;width:49.5px;height:8px;background:#e8b0ae;border-radius:4px 4px 0 0"></div>
<div class="a" style="left:1499.5px;top:1534px;width:8px;height:8px;background:#e8b0ae;border-radius:0 5px 0 0"></div>
<div class="a" style="left:1517px;top:1536px;width:55px;height:6px;background:#fbf3ee;border-radius:4px 4px 0 0"></div>
</body></html>
